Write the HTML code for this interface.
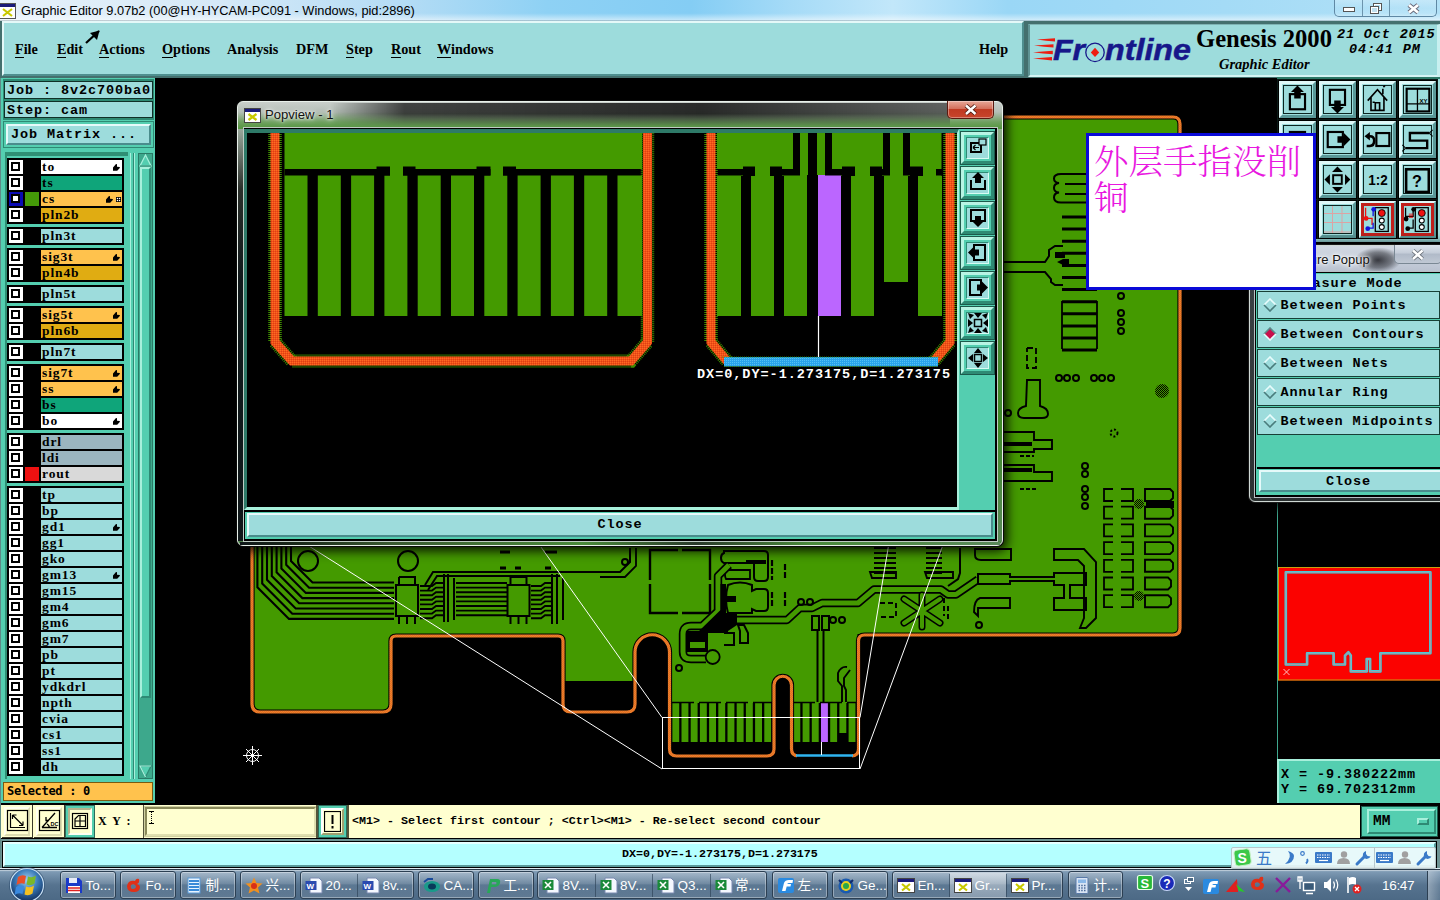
<!DOCTYPE html>
<html lang="en">
<head>
<meta charset="utf-8">
<title>Graphic Editor 9.07b2</title>
<style>
html,body{margin:0;padding:0;}
body{width:1440px;height:900px;overflow:hidden;background:#000;position:relative;font-family:"Liberation Sans","Noto Sans CJK SC",sans-serif;}
.abs{position:absolute;}
#root{position:absolute;left:0;top:0;width:1440px;height:900px;overflow:hidden;background:#000;}
.mono{font-family:"Liberation Mono","DejaVu Sans Mono",monospace;font-weight:bold;}
.serif{font-family:"Liberation Serif","DejaVu Serif",serif;font-weight:bold;}
/* title bar */
#titlebar{left:0;top:0;width:1440px;height:22px;background:linear-gradient(180deg,rgba(255,255,255,0) 0,rgba(255,255,255,0) 60%,rgba(255,255,255,0.55) 92%,rgba(60,90,100,0.9) 96%),linear-gradient(90deg,#e6f1fa 0%,#d6e9f7 15%,#b4dcf5 28%,#8ed1f4 38%,#84cdf4 48%,#a6dbf7 55%,#c2e7fa 62%,#9ad7f6 70%,#a4dbf6 85%,#b2e1f7 100%);}
#titletext{left:21px;top:2px;font-size:12.8px;color:#000;white-space:nowrap;line-height:18px;}
/* menu */
.lt{background:#9ddcdc;}
#menubar{left:2px;top:21px;width:1022px;height:55px;background:#9ddcdc;box-sizing:border-box;border-top:2px solid #e4f8f8;border-left:2px solid #e4f8f8;border-bottom:2px solid #4f8f8f;border-right:2px solid #4f8f8f;}
#logobar{left:1028px;top:24px;width:412px;height:53px;background:#9ddcdc;box-sizing:border-box;border-top:1px solid #7fb4b4;border-left:2px solid #5f9494;border-bottom:2px solid #d4f4f4;border-right:3px solid #c8f0f0;}
.mi{position:absolute;top:40px;font-size:14.2px;line-height:18px;color:#000;white-space:nowrap;}
.mi u{text-decoration:none;border-bottom:1.5px solid #000;}
/* left panel */
#leftpanel{left:1px;top:78px;width:154px;height:725px;background:#54ceb0;}
.box{position:absolute;box-sizing:border-box;background:#9ddcdc;border:1px solid #103028;}
.grp{position:absolute;left:5px;width:118px;background:#000;}
.row{position:absolute;left:0;width:118px;height:16px;}
.cb{position:absolute;left:2px;top:1px;width:14px;height:14px;background:#fff;box-sizing:border-box;border:3px solid #fff;outline:0;}
.cb i{position:absolute;left:-1px;top:-1px;width:9px;height:9px;box-sizing:border-box;border:2px solid #000;background:#fff;}
.sw{position:absolute;left:18px;top:1px;width:14px;height:14px;}
.nm{position:absolute;left:34px;top:1px;width:81px;height:14px;font-family:"Liberation Serif","DejaVu Serif",serif;font-weight:bold;font-size:13.5px;line-height:13px;color:#000;padding-left:1px;letter-spacing:0.9px;box-sizing:border-box;white-space:nowrap;overflow:hidden;}
</style>
</head>
<body>
<div id="root">
<div id="titlebar" class="abs">
  <svg class="abs" style="left:-1px;top:3px" width="17" height="16" viewBox="0 0 17 16"><rect x="0.5" y="0.5" width="16" height="15" fill="#fff" stroke="#555"/><rect x="1" y="1" width="15" height="3" fill="#1a1a7a"/><path d="M4 6 L13 13 M13 6 L4 13" stroke="#c8c800" stroke-width="2.2"/></svg>
  <div id="titletext" class="abs">Graphic Editor 9.07b2 (00@HY-HYCAM-PC091 - Windows, pid:2896)</div>
  <div class="abs" style="left:1334px;top:0;width:103px;height:17px;border:1px solid #5f88a4;border-top:0;border-radius:0 0 5px 5px;background:linear-gradient(rgba(255,255,255,0.250),rgba(255,255,255,0.050) 50%,rgba(255,255,255,0.150));box-sizing:border-box;"></div>
  <div class="abs" style="left:1362px;top:0;width:1px;height:16px;background:#6c94ad"></div>
  <div class="abs" style="left:1389px;top:0;width:1px;height:16px;background:#6c94ad"></div>
  <svg class="abs" style="left:1334px;top:0" width="100" height="17" viewBox="0 0 100 17">
    <rect x="9.500" y="7.500" width="11" height="4" fill="#fff" stroke="#555" stroke-width="1"/>
    <rect x="39.500" y="3.500" width="8" height="7" fill="none" stroke="#555" stroke-width="1"/><rect x="40.500" y="4.500" width="6" height="5" fill="none" stroke="#fff"/>
    <rect x="36.500" y="6.500" width="8" height="7" fill="#c0e0f0" stroke="#555" stroke-width="1"/><rect x="37.500" y="7.500" width="6" height="5" fill="none" stroke="#fff"/>
    <path d="M75 5 L84 12.500 M84 5 L75 12.500" stroke="#667" stroke-width="4.6"/><path d="M75 5 L84 12.500 M84 5 L75 12.500" stroke="#fff" stroke-width="2.800"/>
  </svg>
</div>

<div class="abs" style="left:0;top:21px;width:1440px;height:57px;background:#44706e"></div>
<div id="menubar" class="abs"></div>
<div id="logobar" class="abs"></div>
<div class="mi serif" style="left:15px"><u>F</u>ile</div>
<div class="mi serif" style="left:57px"><u>E</u>dit</div>
<div class="mi serif" style="left:99px"><u>A</u>ctions</div>
<div class="mi serif" style="left:162px"><u>O</u>ptions</div>
<div class="mi serif" style="left:227px">Analysis</div>
<div class="mi serif" style="left:296px">DFM</div>
<div class="mi serif" style="left:346px"><u>S</u>tep</div>
<div class="mi serif" style="left:391px"><u>R</u>out</div>
<div class="mi serif" style="left:437px"><u>W</u>indows</div>
<div class="mi serif" style="left:979px">Help</div>
<svg class="abs" style="left:82px;top:28px" width="20" height="20" viewBox="0 0 20 20"><path d="M17 3 L4 15" stroke="#000" stroke-width="2.2"/><path d="M17.500 2.500 L8 5 L15 12 Z" fill="#000"/></svg>
<!-- Frontline logo -->
<svg class="abs" style="left:1028px;top:30px" width="170" height="40" viewBox="1028 30 170 40">
  <g fill="#ee1c10"><path d="M1037 39.500 L1055 38.200 V41.600 L1046 40.800 Z"/><path d="M1034 45.600 L1053.500 44.200 V47.600 L1044 46.800 Z"/><path d="M1033 52.200 L1052.800 50.800 V54.200 L1043 53.400 Z"/><path d="M1033 58.400 L1052 57 V60.400 L1043 59.600 Z"/></g>
  <g font-family="Liberation Sans, sans-serif" font-weight="bold" font-style="italic" font-size="30" fill="#17178a" stroke="#17178a" stroke-width="0.500">
  <text x="1053" y="59.500" textLength="32" lengthAdjust="spacingAndGlyphs">Fr</text>
  <text x="1105" y="59.500" textLength="86" lengthAdjust="spacingAndGlyphs">ntline</text></g>
  <circle cx="1095" cy="52.400" r="9.200" fill="none" stroke="#17178a" stroke-width="1.300"/>
  <path d="M1095 47.800 L1099.200 52.400 L1095 57 L1090.800 52.400 Z" fill="#ee1c10"/>
</svg>
<div class="abs serif" style="left:1196px;top:25px;font-size:24.6px;line-height:28px;white-space:nowrap;color:#000">Genesis 2000</div>
<div class="abs serif" style="left:1219px;top:55px;font-size:14.5px;line-height:18px;font-style:italic;white-space:nowrap;color:#000">Graphic Editor</div>
<div class="abs mono" style="left:1337px;top:27px;font-size:13.5px;line-height:16px;font-style:italic;white-space:pre;color:#000;letter-spacing:0.85px">21 Oct 2015</div>
<div class="abs mono" style="left:1349px;top:42px;font-size:13.5px;line-height:16px;font-style:italic;white-space:pre;color:#000;letter-spacing:0.85px">04:41 PM</div>

<div id="leftpanel" class="abs"></div>
<div class="abs" style="left:3px;top:79px;width:151px;height:41px;background:#2e8a74"></div>
<div class="box mono" style="left:4px;top:81px;width:149px;height:18px;font-size:13.5px;line-height:18.5px;padding-left:2px;white-space:pre;letter-spacing:0.9px">Job : 8v2c700ba0</div>
<div class="box mono" style="left:4px;top:101px;width:149px;height:17px;font-size:13.5px;line-height:17.5px;padding-left:2px;white-space:pre;letter-spacing:0.9px">Step: cam</div>
<div class="abs" style="left:3px;top:121px;width:151px;height:27px;background:#2e8a74"></div>
<div class="abs" style="left:4px;top:122px;width:149px;height:25px;background:#54ceb0"></div>
<div class="abs mono" style="left:6px;top:124px;width:145px;height:21px;box-sizing:border-box;background:#9ddcdc;border-top:2px solid #e6fafa;border-left:2px solid #e6fafa;border-bottom:2px solid #4a8c8c;border-right:2px solid #4a8c8c;font-size:13.5px;line-height:18.5px;padding-left:3px;white-space:pre;letter-spacing:0.9px">Job Matrix ...</div>
<div class="abs" style="left:5px;top:152px;width:123px;height:627px;background:#2f8f74"></div>
<div class="abs" style="left:7px;top:156px;width:121px;height:623px;background:#54ceb0"></div>
<div class="abs" style="left:7px;top:158px;width:117px;height:66px;background:#000">
<div class="row" style="top:1px"><span class="cb"><i></i></span><span class="nm" style="background:#ffffff">to</span><svg class="abs" style="left:106px;top:5px" width="8" height="8" viewBox="0 0 8 8"><path d="M0 6.800 V3.600 L3 0 L4 0.300 V2.800 L6.800 3 V4 L4.200 6.800 Z" fill="#000"/></svg></div>
<div class="row" style="top:17px"><span class="cb"><i></i></span><span class="nm" style="background:#0fa57a">ts</span></div>
<div class="row" style="top:33px"><span class="cb" style="border-color:#0a0ab4;background:#0a0ab4"><i></i></span><span class="sw" style="background:#449a08"></span><span class="nm" style="background:#ffc24d">cs</span><svg class="abs" style="left:99px;top:5px" width="8" height="8" viewBox="0 0 8 8"><path d="M0 6.800 V3.600 L3 0 L4 0.300 V2.800 L6.800 3 V4 L4.200 6.800 Z" fill="#000"/></svg><svg class="abs" style="left:109px;top:6px" width="5" height="5" viewBox="0 0 5 5"><rect x="0" y="0" width="5" height="5" fill="#000"/><rect x="0.800" y="0.800" width="1.300" height="1.300" fill="#fff"/><rect x="2.900" y="0.800" width="1.300" height="1.300" fill="#fff"/><rect x="0.800" y="2.900" width="1.300" height="1.300" fill="#fff"/><rect x="2.900" y="2.900" width="1.300" height="1.300" fill="#fff"/></svg></div>
<div class="row" style="top:49px"><span class="cb"><i></i></span><span class="nm" style="background:#e0ac12">pln2b</span></div>
</div>
<div class="abs" style="left:7px;top:227px;width:117px;height:18px;background:#000">
<div class="row" style="top:1px"><span class="cb"><i></i></span><span class="nm" style="background:#9ddcdc">pln3t</span></div>
</div>
<div class="abs" style="left:7px;top:248px;width:117px;height:34px;background:#000">
<div class="row" style="top:1px"><span class="cb"><i></i></span><span class="nm" style="background:#ffc24d">sig3t</span><svg class="abs" style="left:106px;top:5px" width="8" height="8" viewBox="0 0 8 8"><path d="M0 6.800 V3.600 L3 0 L4 0.300 V2.800 L6.800 3 V4 L4.200 6.800 Z" fill="#000"/></svg></div>
<div class="row" style="top:17px"><span class="cb"><i></i></span><span class="nm" style="background:#e0ac12">pln4b</span></div>
</div>
<div class="abs" style="left:7px;top:285px;width:117px;height:18px;background:#000">
<div class="row" style="top:1px"><span class="cb"><i></i></span><span class="nm" style="background:#9ddcdc">pln5t</span></div>
</div>
<div class="abs" style="left:7px;top:306px;width:117px;height:34px;background:#000">
<div class="row" style="top:1px"><span class="cb"><i></i></span><span class="nm" style="background:#ffc24d">sig5t</span><svg class="abs" style="left:106px;top:5px" width="8" height="8" viewBox="0 0 8 8"><path d="M0 6.800 V3.600 L3 0 L4 0.300 V2.800 L6.800 3 V4 L4.200 6.800 Z" fill="#000"/></svg></div>
<div class="row" style="top:17px"><span class="cb"><i></i></span><span class="nm" style="background:#e0ac12">pln6b</span></div>
</div>
<div class="abs" style="left:7px;top:343px;width:117px;height:18px;background:#000">
<div class="row" style="top:1px"><span class="cb"><i></i></span><span class="nm" style="background:#9ddcdc">pln7t</span></div>
</div>
<div class="abs" style="left:7px;top:364px;width:117px;height:66px;background:#000">
<div class="row" style="top:1px"><span class="cb"><i></i></span><span class="nm" style="background:#ffc24d">sig7t</span><svg class="abs" style="left:106px;top:5px" width="8" height="8" viewBox="0 0 8 8"><path d="M0 6.800 V3.600 L3 0 L4 0.300 V2.800 L6.800 3 V4 L4.200 6.800 Z" fill="#000"/></svg></div>
<div class="row" style="top:17px"><span class="cb"><i></i></span><span class="nm" style="background:#ffc24d">ss</span><svg class="abs" style="left:106px;top:5px" width="8" height="8" viewBox="0 0 8 8"><path d="M0 6.800 V3.600 L3 0 L4 0.300 V2.800 L6.800 3 V4 L4.200 6.800 Z" fill="#000"/></svg></div>
<div class="row" style="top:33px"><span class="cb"><i></i></span><span class="nm" style="background:#0fa57a">bs</span></div>
<div class="row" style="top:49px"><span class="cb"><i></i></span><span class="nm" style="background:#ffffff">bo</span><svg class="abs" style="left:106px;top:5px" width="8" height="8" viewBox="0 0 8 8"><path d="M0 6.800 V3.600 L3 0 L4 0.300 V2.800 L6.800 3 V4 L4.200 6.800 Z" fill="#000"/></svg></div>
</div>
<div class="abs" style="left:7px;top:433px;width:117px;height:50px;background:#000">
<div class="row" style="top:1px"><span class="cb"><i></i></span><span class="nm" style="background:#9bb5bf">drl</span></div>
<div class="row" style="top:17px"><span class="cb"><i></i></span><span class="nm" style="background:#9bb5bf">ldi</span></div>
<div class="row" style="top:33px"><span class="cb"><i></i></span><span class="sw" style="background:#ee1111"></span><span class="nm" style="background:#d9d9d9">rout</span></div>
</div>
<div class="abs" style="left:7px;top:486px;width:117px;height:290px;background:#000">
<div class="row" style="top:1px"><span class="cb"><i></i></span><span class="nm" style="background:#9ddcdc">tp</span></div>
<div class="row" style="top:17px"><span class="cb"><i></i></span><span class="nm" style="background:#9ddcdc">bp</span></div>
<div class="row" style="top:33px"><span class="cb"><i></i></span><span class="nm" style="background:#9ddcdc">gd1</span><svg class="abs" style="left:106px;top:5px" width="8" height="8" viewBox="0 0 8 8"><path d="M0 6.800 V3.600 L3 0 L4 0.300 V2.800 L6.800 3 V4 L4.200 6.800 Z" fill="#000"/></svg></div>
<div class="row" style="top:49px"><span class="cb"><i></i></span><span class="nm" style="background:#9ddcdc">gg1</span></div>
<div class="row" style="top:65px"><span class="cb"><i></i></span><span class="nm" style="background:#9ddcdc">gko</span></div>
<div class="row" style="top:81px"><span class="cb"><i></i></span><span class="nm" style="background:#9ddcdc">gm13</span><svg class="abs" style="left:106px;top:5px" width="8" height="8" viewBox="0 0 8 8"><path d="M0 6.800 V3.600 L3 0 L4 0.300 V2.800 L6.800 3 V4 L4.200 6.800 Z" fill="#000"/></svg></div>
<div class="row" style="top:97px"><span class="cb"><i></i></span><span class="nm" style="background:#9ddcdc">gm15</span></div>
<div class="row" style="top:113px"><span class="cb"><i></i></span><span class="nm" style="background:#9ddcdc">gm4</span></div>
<div class="row" style="top:129px"><span class="cb"><i></i></span><span class="nm" style="background:#9ddcdc">gm6</span></div>
<div class="row" style="top:145px"><span class="cb"><i></i></span><span class="nm" style="background:#9ddcdc">gm7</span></div>
<div class="row" style="top:161px"><span class="cb"><i></i></span><span class="nm" style="background:#9ddcdc">pb</span></div>
<div class="row" style="top:177px"><span class="cb"><i></i></span><span class="nm" style="background:#9ddcdc">pt</span></div>
<div class="row" style="top:193px"><span class="cb"><i></i></span><span class="nm" style="background:#9ddcdc">ydkdrl</span></div>
<div class="row" style="top:209px"><span class="cb"><i></i></span><span class="nm" style="background:#9ddcdc">npth</span></div>
<div class="row" style="top:225px"><span class="cb"><i></i></span><span class="nm" style="background:#9ddcdc">cvia</span></div>
<div class="row" style="top:241px"><span class="cb"><i></i></span><span class="nm" style="background:#9ddcdc">cs1</span></div>
<div class="row" style="top:257px"><span class="cb"><i></i></span><span class="nm" style="background:#9ddcdc">ss1</span></div>
<div class="row" style="top:273px"><span class="cb"><i></i></span><span class="nm" style="background:#9ddcdc">dh</span></div>
</div>
<div class="abs" style="left:128px;top:153px;width:9px;height:626px;background:#54ceb0"></div>
<div class="abs" style="left:130px;top:153px;width:1px;height:626px;background:#a8f0dc"></div>
<div class="abs" style="left:133px;top:153px;width:1px;height:626px;background:#2e8a74"></div>
<div class="abs" style="left:134px;top:153px;width:1px;height:626px;background:#a8f0dc"></div>
<div class="abs" style="left:138px;top:153px;width:15px;height:626px;background:#3da88c;box-sizing:border-box;border:1px solid #2a7a66"></div>
<div class="abs" style="left:140px;top:167px;width:11px;height:531px;background:#54ceb0;box-sizing:border-box;border-left:2px solid #a8f0dc;border-top:2px solid #a8f0dc;border-right:2px solid #2e8a74;border-bottom:2px solid #2e8a74"></div>
<svg class="abs" style="left:139px;top:154px" width="13" height="13" viewBox="0 0 13 13"><path d="M6.500 1 L12 12 H1 Z" fill="#54ceb0" stroke="#a8f0dc" stroke-width="1.200"/><path d="M12 12 H1" stroke="#2e8a74" stroke-width="1.200"/></svg>
<svg class="abs" style="left:139px;top:765px" width="13" height="13" viewBox="0 0 13 13"><path d="M6.500 12 L12 1 H1 Z" fill="#54ceb0" stroke="#2e8a74" stroke-width="1.200"/><path d="M12 1 H1 L6.500 12" stroke="#a8f0dc" stroke-width="1.200" fill="none"/></svg>
<div class="abs mono" style="left:3px;top:782px;width:150px;height:19px;box-sizing:border-box;background:#ffc24d;border:1px solid #7a5a10;font-size:12px;line-height:16px;padding-left:3px;white-space:pre;font-family:'DejaVu Sans Mono','Liberation Mono',monospace;letter-spacing:-0.32px">Selected : 0</div>

<svg class="abs" style="left:0;top:0" width="1440" height="900" viewBox="0 0 1440 900">
<defs><clipPath id="cv"><rect x="155" y="78" width="1122" height="725"/></clipPath>
<pattern id="hat" width="2" height="2" patternUnits="userSpaceOnUse"><rect width="2" height="2" fill="#449a00"/><rect width="1" height="1" fill="#000"/><rect x="1" y="1" width="1" height="1" fill="#000"/></pattern>
<pattern id="och" width="2" height="2" patternUnits="userSpaceOnUse"><rect width="2" height="2" fill="#f4661c"/><rect width="1" height="1" fill="#dc8a34"/><rect x="1" y="1" width="1" height="1" fill="#dc8a34"/></pattern>
</defs>
<g clip-path="url(#cv)">
<path d="M258 118 H1174 Q1179 118 1179 123 V634 H857.500 V703 H792 V685 A8.750 8.750 0 0 0 774.500 685 V703 H670.500 V652 A17.250 17.250 0 0 0 636 652 V681 H564 V637 H390 V705 Q390 711 384 711 H260 Q254 711 254 705 V124 Q254 118 258 118 Z" fill="#449a00"/>
<rect x="672.3" y="703" width="6.900" height="39" fill="#449a00"/>
<rect x="681.5" y="703" width="6.900" height="39" fill="#449a00"/>
<rect x="690.7" y="703" width="6.900" height="39" fill="#449a00"/>
<rect x="699.9" y="703" width="6.900" height="39" fill="#449a00"/>
<rect x="709.1" y="703" width="6.900" height="39" fill="#449a00"/>
<rect x="718.3" y="703" width="6.900" height="39" fill="#449a00"/>
<rect x="727.5" y="703" width="6.900" height="39" fill="#449a00"/>
<rect x="736.7" y="703" width="6.900" height="39" fill="#449a00"/>
<rect x="745.9" y="703" width="6.900" height="39" fill="#449a00"/>
<rect x="755.1" y="703" width="6.900" height="39" fill="#449a00"/>
<rect x="764.3" y="703" width="6.900" height="39" fill="#449a00"/>
<rect x="793.4" y="703" width="6.900" height="39" fill="#449a00"/>
<rect x="802.6" y="703" width="6.900" height="39" fill="#449a00"/>
<rect x="811.8" y="703" width="6.900" height="39" fill="#449a00"/>
<rect x="821.0" y="703" width="6.900" height="39" fill="#bb66ff"/>
<rect x="830.2" y="703" width="6.900" height="39" fill="#449a00"/>
<rect x="839.4" y="703" width="6.900" height="30" fill="#449a00"/>
<rect x="848.6" y="703" width="6.900" height="39" fill="#449a00"/>
<path d="M672 702.500 H772 M793 702.500 H856" stroke="#000" stroke-width="1.300" stroke-dasharray="22 5"/>
<path d="M260 117 H1173 Q1180 117 1180 124 V628 Q1180 635 1173 635 H864.500 Q858.500 635 858.500 641 V749 Q858.500 756 851.500 756 H798.500 Q791.500 756 791.500 749 V685 A8.750 8.750 0 0 0 774 685 V749 Q774 756 767 756 H676.500 Q669.500 756 669.500 749 V652 A17.250 17.250 0 0 0 635 652 V704 Q635 712 627 712 H571 Q563 712 563 704 V641 Q563 636 558 636 H396 Q391 636 391 641 V704 Q391 712 383 712 H260 Q252 712 252 704 V125 Q252 117 260 117 Z" fill="none" stroke="#000" stroke-width="5.200"/>
<path d="M260 117 H1173 Q1180 117 1180 124 V628 Q1180 635 1173 635 H864.500 Q858.500 635 858.500 641 V749 Q858.500 756 851.500 756 H798.500 Q791.500 756 791.500 749 V685 A8.750 8.750 0 0 0 774 685 V749 Q774 756 767 756 H676.500 Q669.500 756 669.500 749 V652 A17.250 17.250 0 0 0 635 652 V704 Q635 712 627 712 H571 Q563 712 563 704 V641 Q563 636 558 636 H396 Q391 636 391 641 V704 Q391 712 383 712 H260 Q252 712 252 704 V125 Q252 117 260 117 Z" fill="none" stroke="url(#och)" stroke-width="3.200"/>
<path d="M797 756 H852" stroke="#000" stroke-width="4.500"/><path d="M796 755.500 H853" stroke="#2fb4f0" stroke-width="2.400"/>
<path d="M821.500 742 V755" stroke="#fff" stroke-width="1"/>
<path d="M394 582.5 H312.5 L291.0 561.0 V546" stroke="#000" fill="none" stroke-width="2.100"/>
<path d="M394 587.7 H309.1 L286.2 564.8 V546" stroke="#000" fill="none" stroke-width="2.100"/>
<path d="M394 592.9 H305.8 L281.4 568.5 V546" stroke="#000" fill="none" stroke-width="2.100"/>
<path d="M394 598.1 H302.4 L276.6 572.3 V546" stroke="#000" fill="none" stroke-width="2.100"/>
<path d="M394 603.3 H299.1 L271.8 576.0 V546" stroke="#000" fill="none" stroke-width="2.100"/>
<path d="M394 608.5 H295.7 L267.0 579.8 V546" stroke="#000" fill="none" stroke-width="2.100"/>
<path d="M394 613.7 H292.3 L262.2 583.6 V546" stroke="#000" fill="none" stroke-width="2.100"/>
<path d="M394 618.9 H289.0 L257.4 587.3 V546" stroke="#000" fill="none" stroke-width="2.100"/>
<circle cx="308" cy="561" r="10" stroke="#000" fill="none" stroke-width="2"/>
<circle cx="408" cy="561" r="10" stroke="#000" fill="none" stroke-width="2"/>
<rect x="396.0" y="585" width="22" height="31" stroke="#000" fill="none" stroke-width="2"/>
<path d="M399.0 577 v8 M415.0 577 v8 M399.0 577 h17 M399.0 616 v8 M407.0 616 v8 M415.0 616 v8" stroke="#000" fill="none" stroke-width="2"/>
<rect x="507.5" y="585" width="22" height="31" stroke="#000" fill="none" stroke-width="2"/>
<path d="M510.5 577 v8 M526.5 577 v8 M510.5 577 h17 M510.5 616 v8 M518.5 616 v8 M526.5 616 v8" stroke="#000" fill="none" stroke-width="2"/>
<path d="M420 586.0 h12 l4 -3 h8 M456 583.0 H507" stroke="#000" fill="none" stroke-width="1.900"/>
<path d="M531 586.0 h10 l4 -3 h8" stroke="#000" fill="none" stroke-width="1.900"/>
<path d="M420 590.6 h12 l4 -3 h8 M456 587.6 H507" stroke="#000" fill="none" stroke-width="1.900"/>
<path d="M531 590.6 h10 l4 -3 h8" stroke="#000" fill="none" stroke-width="1.900"/>
<path d="M420 595.2 h12 l4 -3 h8 M456 592.2 H507" stroke="#000" fill="none" stroke-width="1.900"/>
<path d="M531 595.2 h10 l4 -3 h8" stroke="#000" fill="none" stroke-width="1.900"/>
<path d="M420 599.8 h12 l4 -3 h8 M456 596.8 H507" stroke="#000" fill="none" stroke-width="1.900"/>
<path d="M531 599.8 h10 l4 -3 h8" stroke="#000" fill="none" stroke-width="1.900"/>
<path d="M420 604.4 h12 l4 -3 h8 M456 601.4 H507" stroke="#000" fill="none" stroke-width="1.900"/>
<path d="M531 604.4 h10 l4 -3 h8" stroke="#000" fill="none" stroke-width="1.900"/>
<path d="M420 609.0 h12 l4 -3 h8 M456 606.0 H507" stroke="#000" fill="none" stroke-width="1.900"/>
<path d="M531 609.0 h10 l4 -3 h8" stroke="#000" fill="none" stroke-width="1.900"/>
<path d="M420 613.6 h12 l4 -3 h8 M456 610.6 H507" stroke="#000" fill="none" stroke-width="1.900"/>
<path d="M531 613.6 h10 l4 -3 h8" stroke="#000" fill="none" stroke-width="1.900"/>
<path d="M420 618.2 h12 l4 -3 h8 M456 615.2 H507" stroke="#000" fill="none" stroke-width="1.900"/>
<path d="M531 618.2 h10 l4 -3 h8" stroke="#000" fill="none" stroke-width="1.900"/>
<path d="M444 574 V622 M448 574 V622 M454 578 V620" stroke="#000" fill="none" stroke-width="2"/>
<path d="M552 574 V624 M557 574 V624 M563 578 V620" stroke="#000" fill="none" stroke-width="2"/>
<path d="M425 585 L433 572 H620 L630 562 V548" stroke="#000" fill="none" stroke-width="2"/>
<path d="M428 590 L437 576 H560" stroke="#000" fill="none" stroke-width="2"/>
<path d="M500 552 h10 M545 552 h12 M500 568 h6 M515 568 h6 M545 568 h6" stroke="#000" fill="none" stroke-width="3"/>
<path d="M650 580 V550 H678 M682 550 H710 V580 M710 584 V613 H682 M678 613 H650 V584" stroke="#000" fill="none" stroke-width="2.400"/>
<path d="M600 577 H625 L636 566 V548" stroke="#000" fill="none" stroke-width="1.800"/>
<circle cx="625" cy="562" r="3" stroke="#000" fill="none" stroke-width="2"/>
<path d="M724 551 h40 q4 0 4 4 v22 q0 4 -4 4 h-6 q-4 0 -4 -4 v-14 h-30 q-3 -1 -3 -5 q0 -4 3 -5 Z" stroke="#000" fill="none" stroke-width="2"/>
<path d="M726 570 h24 v9 h-24 q-2 -4 0 -9 Z" stroke="#000" fill="none" stroke-width="1.800"/>
<path d="M728 585 q12 -5 24 0 v6 l4 -2 h8 q4 0 4 4 v14 q0 4 -4 4 h-8 l-4 -2 v4 h-24 q-4 -14 0 -28 Z" stroke="#000" fill="none" stroke-width="2"/>
<path d="M724 596 h12 v6 h-12 Z M746 560 h20 v4 h-20 Z" fill="#000"/>
<path d="M772 560 v20 M785 564 v14 M772 592 v14 M785 592 v14" stroke="#000" fill="none" stroke-width="2.200" stroke-dasharray="6 2"/>
<path d="M978 579.500 L956 594.500 H948 L941 589.500 H874 L858 603 H822 L812 608 H800 L787 620 H735" stroke="#000" fill="none" stroke-width="8.400" stroke-linejoin="round"/>
<path d="M729 565 L718 576 V611 L702 626 H691 Q683 626 683 634 V652 Q683 659 691 659 H706" stroke="#000" fill="none" stroke-width="8.400" stroke-linejoin="round"/>
<path d="M978 579.500 L956 594.500 H948 L941 589.500 H874 L858 603 H822 L812 608 H800 L787 620 H735" fill="none" stroke="#449a00" stroke-width="5" stroke-linejoin="round"/>
<path d="M729 565 L718 576 V611 L702 626 H691 Q683 626 683 634 V652 Q683 659 691 659 H706" fill="none" stroke="#449a00" stroke-width="5" stroke-linejoin="round"/>
<circle cx="712.700" cy="657" r="7" stroke="#000" fill="none" stroke-width="1.800" style="fill:#449a00"/>
<path d="M720.500 584 H726 V613 H737 V625 L728 631 V637 H708 V652 H687 V631 H699 L720.500 610 Z" fill="#000"/>
<rect x="690" y="642" width="15" height="6" fill="#449a00"/><rect x="708" y="633" width="17" height="5.500" fill="#449a00"/><rect x="724" y="633" width="10" height="12" fill="#449a00"/>
<path d="M724 633 h10 v12 h-10 M738 625 h6 l4 8 v10 h-8 v-12 Z" stroke="#000" fill="none" stroke-width="2"/>
<circle cx="679" cy="668" r="3" stroke="#000" fill="none" stroke-width="2"/>
<circle cx="801" cy="602" r="3" stroke="#000" fill="none" stroke-width="2"/>
<circle cx="810" cy="602" r="3" stroke="#000" fill="none" stroke-width="2"/>
<circle cx="833" cy="620" r="3" stroke="#000" fill="none" stroke-width="2"/>
<circle cx="842" cy="620" r="3" stroke="#000" fill="none" stroke-width="2"/>
<path d="M812 616 h7 v14 h-7 Z M822 616 h7 v14 h-7 Z" stroke="#000" fill="none" stroke-width="2"/>
<path d="M817.500 630 V702 M823.500 630 V702" stroke="#000" fill="none" stroke-width="2"/>
<path d="M847 667 q-6 -1 -9 6 v8 l4 5 v16 M850 670 l-6 8 v8 l2 4 v12" stroke="#000" fill="none" stroke-width="1.900"/>
<path d="M922 611 m-18 -12 l36 24 m0 -24 l-36 24 m18 -28 v32" stroke="#000" stroke-width="7" stroke-linecap="round" fill="none"/>
<path d="M922 611 m-18 -12 l36 24 m0 -24 l-36 24 m18 -28 v32" stroke="#449a00" stroke-width="4" stroke-linecap="round" fill="none"/>
<path d="M880 603 h16 v14 h-16" stroke="#000" fill="none" stroke-width="1.900" stroke-dasharray="5 3"/>
<path d="M944 598 v18 M948 606 v14" stroke="#000" fill="none" stroke-width="2" stroke-dasharray="5 3"/>
<path d="M874 548 h22 M926 548 h16" stroke="#000" fill="none" stroke-width="2"/>
<path d="M874 553 h22 M926 553 h16" stroke="#000" fill="none" stroke-width="2"/>
<path d="M874 558 h22 M926 558 h16" stroke="#000" fill="none" stroke-width="2"/>
<path d="M874 563 h22 M926 563 h16" stroke="#000" fill="none" stroke-width="2"/>
<path d="M874 568 h22 M926 568 h16" stroke="#000" fill="none" stroke-width="2"/>
<path d="M874 573 h22 M926 573 h16" stroke="#000" fill="none" stroke-width="2"/>
<path d="M870 572 h26 v6 h-24 Z M925 572 h28 v6 h-26 Z" stroke="#000" fill="none" stroke-width="1.900"/>
<path d="M975 549 h36 v11 h-30 q-6 0 -6 -5 Z" stroke="#000" fill="none" stroke-width="1.900"/>
<path d="M978 574 H1010 V577 H1054 V573 H1086 V585 H1070 V598 H1086 V610 H1054 V598 H1064 V585 H1054 V581 H1010 V584 H978 Z" stroke="#000" fill="none" stroke-width="2" style="fill:#449a00"/>
<path d="M948 586 L958 579 L960 573 V548" stroke="#000" fill="none" stroke-width="2"/>
<path d="M1010 598 h-30 q-6 2 -6 14 l4 4 v-8 h32 Z" stroke="#000" fill="none" stroke-width="1.900"/>
<circle cx="979" cy="625" r="3" stroke="#000" fill="none" stroke-width="2"/>
<path d="M1054 549 H1084 L1096 562 V618 L1086 628 H1080 L1084 618 V566 L1078 560 H1054 Z" stroke="#000" fill="none" stroke-width="1.900"/>
<path d="M1113 489.0 h-9 v12 h9 M1121 489.0 h12 v12 h-12" stroke="#000" fill="none" stroke-width="1.800"/>
<path d="M1145 489.0 h25 l3 3 v6 l-3 3 h-25 Z" stroke="#000" fill="none" stroke-width="1.900"/>
<path d="M1113 506.7 h-9 v12 h9 M1121 506.7 h12 v12 h-12" stroke="#000" fill="none" stroke-width="1.800"/>
<path d="M1145 506.7 h25 l3 3 v6 l-3 3 h-25 Z" stroke="#000" fill="none" stroke-width="1.900"/>
<path d="M1113 524.4 h-9 v12 h9 M1121 524.4 h12 v12 h-12" stroke="#000" fill="none" stroke-width="1.800"/>
<path d="M1145 524.4 h25 l3 3 v6 l-3 3 h-25 Z" stroke="#000" fill="none" stroke-width="1.900"/>
<path d="M1113 542.1 h-9 v12 h9 M1121 542.1 h12 v12 h-12" stroke="#000" fill="none" stroke-width="1.800"/>
<path d="M1145 542.1 h25 l3 3 v6 l-3 3 h-25 Z" stroke="#000" fill="none" stroke-width="1.900"/>
<path d="M1113 559.8 h-9 v12 h9 M1121 559.8 h12 v12 h-12" stroke="#000" fill="none" stroke-width="1.800"/>
<path d="M1145 559.8 h25 l3 3 v6 l-3 3 h-25 Z" stroke="#000" fill="none" stroke-width="1.900"/>
<path d="M1113 577.5 h-9 v12 h9 M1121 577.5 h12 v12 h-12" stroke="#000" fill="none" stroke-width="1.800"/>
<path d="M1145 577.5 h23 l3 3 v6 l-3 3 h-23 Z" stroke="#000" fill="none" stroke-width="1.900"/>
<path d="M1113 595.2 h-9 v12 h9 M1121 595.2 h12 v12 h-12" stroke="#000" fill="none" stroke-width="1.800"/>
<path d="M1145 595.2 h23 l3 3 v6 l-3 3 h-23 Z" stroke="#000" fill="none" stroke-width="1.900"/>
<rect x="1146" y="501" width="28" height="7" fill="#000"/>
<circle cx="1139" cy="504" r="5" fill="url(#hat)"/><circle cx="1139" cy="596" r="5" fill="url(#hat)"/>
<circle cx="1121" cy="296" r="3" stroke="#000" fill="none" stroke-width="2"/>
<circle cx="1121" cy="313" r="3" stroke="#000" fill="none" stroke-width="2"/>
<circle cx="1121" cy="322" r="3" stroke="#000" fill="none" stroke-width="2"/>
<circle cx="1121" cy="331" r="3" stroke="#000" fill="none" stroke-width="2"/>
<circle cx="1059" cy="378" r="3" stroke="#000" fill="none" stroke-width="2"/>
<circle cx="1067" cy="378" r="3" stroke="#000" fill="none" stroke-width="2"/>
<circle cx="1076" cy="378" r="3" stroke="#000" fill="none" stroke-width="2"/>
<circle cx="1094" cy="378" r="3" stroke="#000" fill="none" stroke-width="2"/>
<circle cx="1102" cy="378" r="3" stroke="#000" fill="none" stroke-width="2"/>
<circle cx="1111" cy="378" r="3" stroke="#000" fill="none" stroke-width="2"/>
<circle cx="1085" cy="466" r="3" stroke="#000" fill="none" stroke-width="2"/>
<circle cx="1085" cy="474" r="3" stroke="#000" fill="none" stroke-width="2"/>
<circle cx="1085" cy="489" r="3" stroke="#000" fill="none" stroke-width="2"/>
<circle cx="1085" cy="497" r="3" stroke="#000" fill="none" stroke-width="2"/>
<circle cx="1085" cy="506" r="3" stroke="#000" fill="none" stroke-width="2"/>
<circle cx="1162" cy="391" r="7" fill="url(#hat)"/>
<circle cx="1114" cy="433" r="3.500" stroke="#000" fill="none" stroke-width="1.900" stroke-dasharray="2 2"/>
<path d="M1027 348 h9 v20 h-9 Z M1027 348 v-0" stroke="#000" fill="none" stroke-width="1.900" stroke-dasharray="6 3"/>
<path d="M1027 380 h13 v26 q8 2 8 8 q0 4 -6 4 h-18 q-6 0 -6 -5 q0 -5 8 -7 Z" stroke="#000" fill="none" stroke-width="1.900"/>
<circle cx="1008" cy="413" r="3" stroke="#000" fill="none" stroke-width="2"/>
<path d="M1004 432 h30 v8 h18 v9 h-18 v3 h-30 M1004 465 h30 v7 h18 v9 h-48" stroke="#000" fill="none" stroke-width="1.900"/>
<path d="M1004 444 h28 M1004 470 h28" stroke="#000" fill="none" stroke-width="4"/>
<path d="M1020 456 h14 M1020 489 h16" stroke="#000" fill="none" stroke-width="1.900" stroke-dasharray="4 2"/>
<path d="M1062 301 V349 M1097 301 V349" stroke="#000" fill="none" stroke-width="1.800"/>
<path d="M1062 217.0 H1097" stroke="#000" fill="none" stroke-width="3"/>
<path d="M1062 229.1 H1097" stroke="#000" fill="none" stroke-width="3"/>
<path d="M1062 241.2 H1097" stroke="#000" fill="none" stroke-width="3"/>
<path d="M1062 253.3 H1097" stroke="#000" fill="none" stroke-width="3"/>
<path d="M1062 265.4 H1097" stroke="#000" fill="none" stroke-width="3"/>
<path d="M1062 277.5 H1097" stroke="#000" fill="none" stroke-width="3"/>
<path d="M1062 289.6 H1097" stroke="#000" fill="none" stroke-width="3"/>
<path d="M1062 301.7 H1097" stroke="#000" fill="none" stroke-width="3"/>
<path d="M1062 313.8 H1097" stroke="#000" fill="none" stroke-width="3"/>
<path d="M1062 325.9 H1097" stroke="#000" fill="none" stroke-width="3"/>
<path d="M1062 338.0 H1097" stroke="#000" fill="none" stroke-width="3"/>
<path d="M1062 350.1 H1097" stroke="#000" fill="none" stroke-width="3"/>
<path d="M1087 174 h-26 q-7 0 -7 4.500 q0 4 5 4.500 q-5 0.500 -5 5 q0 4 5 4.500 q-5 0.500 -5 5 q0 5 7 5 h26 M1087 184 h-22 M1087 194 h-22" stroke="#000" fill="none" stroke-width="2"/>
<path d="M1003 262 h42 l4 -6 v-6 l6 -4 h8 M1003 272 h42 l6 7 v3 l4 3 h8" stroke="#000" fill="none" stroke-width="2"/>
<path d="M1055 252 h10 v6 h-10 Z M1057 262 l6 -3 h6 v6 h-6 Z" fill="#000"/>
<path d="M247 507 L662 769 M247 133 L662 717.500" stroke="#fff" stroke-width="1" fill="none"/>
<path d="M957 133 L860 717.500 M957 507 L860 769" stroke="#fff" stroke-width="1" fill="none"/>
<rect x="662.500" y="717.500" width="197" height="51" fill="none" stroke="#fff" stroke-width="1"/>
<g stroke="#fff" stroke-width="1" fill="none"><circle cx="252.500" cy="755.500" r="6"/><path d="M243 755.500 h19 M252.500 746 v19 M246 749 l13 13 M259 749 l-13 13"/></g>
</g></svg>

<div class="abs" style="left:1277px;top:78px;width:163px;height:164px;background:#0a1a16"></div>
<div class="abs" style="left:1277px;top:77px;width:163px;height:2px;background:#2e7a68"></div>
<div class="abs" style="left:1438px;top:79px;width:2px;height:163px;background:#a0dcdc"></div>
<div class="abs" style="left:1278px;top:80px;width:39px;height:39px;box-sizing:border-box;background:#9ddcdc;border:1px solid #000"></div>
<div class="abs" style="left:1279px;top:81px;width:37px;height:37px;box-sizing:border-box;border-top:3px solid #dff8f8;border-left:3px solid #dff8f8;border-bottom:3px solid #5a9898;border-right:3px solid #5a9898;background:#9ddcdc"></div>
<div class="abs" style="left:1283px;top:85px;width:29px;height:29px;box-sizing:border-box;border:1px solid #0c2420;background:#9ddcdc"></div>
<svg class="abs" style="left:1278px;top:80px" width="39" height="39" viewBox="0 0 39 39"><g transform="translate(20 19) scale(1.080) translate(-19.500 -18.500)"><rect x="12" y="14" width="14" height="14" stroke="#000" fill="none" stroke-width="2"/><path d="M19 6 L25 12 H22 V18 H16 V12 H13 Z" fill="#000"/></g></svg>
<div class="abs" style="left:1318px;top:80px;width:39px;height:39px;box-sizing:border-box;background:#9ddcdc;border:1px solid #000"></div>
<div class="abs" style="left:1319px;top:81px;width:37px;height:37px;box-sizing:border-box;border-top:3px solid #dff8f8;border-left:3px solid #dff8f8;border-bottom:3px solid #5a9898;border-right:3px solid #5a9898;background:#9ddcdc"></div>
<div class="abs" style="left:1323px;top:85px;width:29px;height:29px;box-sizing:border-box;border:1px solid #0c2420;background:#9ddcdc"></div>
<svg class="abs" style="left:1318px;top:80px" width="39" height="39" viewBox="0 0 39 39"><g transform="translate(20 19) scale(1.080) translate(-19.500 -18.500)"><rect x="12" y="10" width="14" height="14" stroke="#000" fill="none" stroke-width="2"/><path d="M19 32 L25 26 H22 V20 H16 V26 H13 Z" fill="#000"/></g></svg>
<div class="abs" style="left:1358px;top:80px;width:39px;height:39px;box-sizing:border-box;background:#9ddcdc;border:1px solid #000"></div>
<div class="abs" style="left:1359px;top:81px;width:37px;height:37px;box-sizing:border-box;border-top:3px solid #dff8f8;border-left:3px solid #dff8f8;border-bottom:3px solid #5a9898;border-right:3px solid #5a9898;background:#9ddcdc"></div>
<div class="abs" style="left:1363px;top:85px;width:29px;height:29px;box-sizing:border-box;border:1px solid #0c2420;background:#9ddcdc"></div>
<svg class="abs" style="left:1358px;top:80px" width="39" height="39" viewBox="0 0 39 39"><g transform="translate(20 19) scale(1.080) translate(-19.500 -18.500)"><path d="M10 20 L19 10 L28 20 M13 17 V29 H25 V17 M17 29 V22 H21 V29 M14.500 21.500 h2 M24 14 V9 M24.500 7.500 l1.500 -1.500" stroke="#000" fill="none" stroke-width="1.500"/></g></svg>
<div class="abs" style="left:1398px;top:80px;width:39px;height:39px;box-sizing:border-box;background:#9ddcdc;border:1px solid #000"></div>
<div class="abs" style="left:1399px;top:81px;width:37px;height:37px;box-sizing:border-box;border-top:3px solid #dff8f8;border-left:3px solid #dff8f8;border-bottom:3px solid #5a9898;border-right:3px solid #5a9898;background:#9ddcdc"></div>
<div class="abs" style="left:1403px;top:85px;width:29px;height:29px;box-sizing:border-box;border:1px solid #0c2420;background:#9ddcdc"></div>
<svg class="abs" style="left:1398px;top:80px" width="39" height="39" viewBox="0 0 39 39"><g transform="translate(20 19) scale(1.080) translate(-19.500 -18.500)"><rect x="9" y="9" width="21" height="21" stroke="#000" fill="none" stroke-width="2"/><path d="M19 9 V30 M9 23 H30" stroke="#000" fill="none" stroke-width="1.200"/><text x="21" y="22" font-family="Liberation Sans,sans-serif" font-size="5.500" font-weight="bold" fill="#000">XY</text></g></svg>
<div class="abs" style="left:1278px;top:120px;width:39px;height:39px;box-sizing:border-box;background:#9ddcdc;border:1px solid #000"></div>
<div class="abs" style="left:1279px;top:121px;width:37px;height:37px;box-sizing:border-box;border-top:3px solid #dff8f8;border-left:3px solid #dff8f8;border-bottom:3px solid #5a9898;border-right:3px solid #5a9898;background:#9ddcdc"></div>
<div class="abs" style="left:1283px;top:125px;width:29px;height:29px;box-sizing:border-box;border:1px solid #0c2420;background:#9ddcdc"></div>
<svg class="abs" style="left:1278px;top:120px" width="39" height="39" viewBox="0 0 39 39"><g transform="translate(20 19) scale(1.080) translate(-19.500 -18.500)"><rect x="12" y="12" width="14" height="14" stroke="#000" fill="none" stroke-width="2"/><path d="M5 19 L11 13 V16 H17 V22 H11 V25 Z" fill="#000"/></g></svg>
<div class="abs" style="left:1318px;top:120px;width:39px;height:39px;box-sizing:border-box;background:#9ddcdc;border:1px solid #000"></div>
<div class="abs" style="left:1319px;top:121px;width:37px;height:37px;box-sizing:border-box;border-top:3px solid #dff8f8;border-left:3px solid #dff8f8;border-bottom:3px solid #5a9898;border-right:3px solid #5a9898;background:#9ddcdc"></div>
<div class="abs" style="left:1323px;top:125px;width:29px;height:29px;box-sizing:border-box;border:1px solid #0c2420;background:#9ddcdc"></div>
<svg class="abs" style="left:1318px;top:120px" width="39" height="39" viewBox="0 0 39 39"><g transform="translate(20 19) scale(1.080) translate(-19.500 -18.500)"><rect x="10" y="12" width="14" height="14" stroke="#000" fill="none" stroke-width="2"/><path d="M31 19 L25 13 V16 H19 V22 H25 V25 Z" fill="#000"/></g></svg>
<div class="abs" style="left:1358px;top:120px;width:39px;height:39px;box-sizing:border-box;background:#9ddcdc;border:1px solid #000"></div>
<div class="abs" style="left:1359px;top:121px;width:37px;height:37px;box-sizing:border-box;border-top:3px solid #dff8f8;border-left:3px solid #dff8f8;border-bottom:3px solid #5a9898;border-right:3px solid #5a9898;background:#9ddcdc"></div>
<div class="abs" style="left:1363px;top:125px;width:29px;height:29px;box-sizing:border-box;border:1px solid #0c2420;background:#9ddcdc"></div>
<svg class="abs" style="left:1358px;top:120px" width="39" height="39" viewBox="0 0 39 39"><g transform="translate(20 19) scale(1.080) translate(-19.500 -18.500)"><rect x="18" y="13" width="12" height="12" stroke="#000" fill="none" stroke-width="2"/><path d="M9 25 h3 q4 0 4 -5 q0 -4 -4 -4 h-1" stroke="#000" fill="none" stroke-width="2.400"/><path d="M7 16 L12 12 V20 Z" fill="#000"/></g></svg>
<div class="abs" style="left:1398px;top:120px;width:39px;height:39px;box-sizing:border-box;background:#9ddcdc;border:1px solid #000"></div>
<div class="abs" style="left:1399px;top:121px;width:37px;height:37px;box-sizing:border-box;border-top:3px solid #dff8f8;border-left:3px solid #dff8f8;border-bottom:3px solid #5a9898;border-right:3px solid #5a9898;background:#9ddcdc"></div>
<div class="abs" style="left:1403px;top:125px;width:29px;height:29px;box-sizing:border-box;border:1px solid #0c2420;background:#9ddcdc"></div>
<svg class="abs" style="left:1398px;top:120px" width="39" height="39" viewBox="0 0 39 39"><g transform="translate(20 19) scale(1.080) translate(-19.500 -18.500)"><path d="M8 27 H28 V20 H12 V13 H30" stroke="#000" fill="none" stroke-width="2.200"/><path d="M30 13 l3 -3 M30 13 l3 3 M8 27 l-3 -3 M8 27 l-3 3" stroke="#000" fill="none" stroke-width="1"/></g></svg>
<div class="abs" style="left:1278px;top:160px;width:39px;height:39px;box-sizing:border-box;background:#9ddcdc;border:1px solid #000"></div>
<div class="abs" style="left:1279px;top:161px;width:37px;height:37px;box-sizing:border-box;border-top:3px solid #dff8f8;border-left:3px solid #dff8f8;border-bottom:3px solid #5a9898;border-right:3px solid #5a9898;background:#9ddcdc"></div>
<div class="abs" style="left:1283px;top:165px;width:29px;height:29px;box-sizing:border-box;border:1px solid #0c2420;background:#9ddcdc"></div>
<svg class="abs" style="left:1278px;top:160px" width="39" height="39" viewBox="0 0 39 39"><g transform="translate(20 19) scale(1.080) translate(-19.500 -18.500)"></g></svg>
<div class="abs" style="left:1318px;top:160px;width:39px;height:39px;box-sizing:border-box;background:#9ddcdc;border:1px solid #000"></div>
<div class="abs" style="left:1319px;top:161px;width:37px;height:37px;box-sizing:border-box;border-top:3px solid #dff8f8;border-left:3px solid #dff8f8;border-bottom:3px solid #5a9898;border-right:3px solid #5a9898;background:#9ddcdc"></div>
<div class="abs" style="left:1323px;top:165px;width:29px;height:29px;box-sizing:border-box;border:1px solid #0c2420;background:#9ddcdc"></div>
<svg class="abs" style="left:1318px;top:160px" width="39" height="39" viewBox="0 0 39 39"><g transform="translate(20 19) scale(1.080) translate(-19.500 -18.500)"><rect x="15" y="15" width="8" height="8" stroke="#000" fill="none" stroke-width="1.800"/><path d="M19 7 l-5 5 h10 Z M19 31 l-5 -5 h10 Z M7 19 l5 -5 v10 Z M31 19 l-5 -5 v10 Z" fill="#000"/></g></svg>
<div class="abs" style="left:1358px;top:160px;width:39px;height:39px;box-sizing:border-box;background:#9ddcdc;border:1px solid #000"></div>
<div class="abs" style="left:1359px;top:161px;width:37px;height:37px;box-sizing:border-box;border-top:3px solid #dff8f8;border-left:3px solid #dff8f8;border-bottom:3px solid #5a9898;border-right:3px solid #5a9898;background:#9ddcdc"></div>
<div class="abs" style="left:1363px;top:165px;width:29px;height:29px;box-sizing:border-box;border:1px solid #0c2420;background:#9ddcdc"></div>
<svg class="abs" style="left:1358px;top:160px" width="39" height="39" viewBox="0 0 39 39"><g transform="translate(20 19) scale(1.080) translate(-19.500 -18.500)"><text x="10.500" y="24" font-family="Liberation Sans,sans-serif" font-size="14" font-weight="bold" fill="#000" textLength="18" lengthAdjust="spacingAndGlyphs">1:2</text></g></svg>
<div class="abs" style="left:1398px;top:160px;width:39px;height:39px;box-sizing:border-box;background:#9ddcdc;border:1px solid #000"></div>
<div class="abs" style="left:1399px;top:161px;width:37px;height:37px;box-sizing:border-box;border-top:3px solid #dff8f8;border-left:3px solid #dff8f8;border-bottom:3px solid #5a9898;border-right:3px solid #5a9898;background:#9ddcdc"></div>
<div class="abs" style="left:1403px;top:165px;width:29px;height:29px;box-sizing:border-box;border:1px solid #0c2420;background:#9ddcdc"></div>
<svg class="abs" style="left:1398px;top:160px" width="39" height="39" viewBox="0 0 39 39"><g transform="translate(20 19) scale(1.080) translate(-19.500 -18.500)"><rect x="8.500" y="9.500" width="21" height="21" stroke="#000" fill="none" stroke-width="2.400"/><text x="14" y="26" font-family="Liberation Sans,sans-serif" font-size="15" font-weight="bold" fill="#000">?</text></g></svg>
<div class="abs" style="left:1278px;top:200px;width:39px;height:39px;box-sizing:border-box;background:#9ddcdc;border:1px solid #000"></div>
<div class="abs" style="left:1279px;top:201px;width:37px;height:37px;box-sizing:border-box;border-top:3px solid #dff8f8;border-left:3px solid #dff8f8;border-bottom:3px solid #5a9898;border-right:3px solid #5a9898;background:#9ddcdc"></div>
<div class="abs" style="left:1283px;top:205px;width:29px;height:29px;box-sizing:border-box;border:1px solid #0c2420;background:#9ddcdc"></div>
<svg class="abs" style="left:1278px;top:200px" width="39" height="39" viewBox="0 0 39 39"><g transform="translate(20 19) scale(1.080) translate(-19.500 -18.500)"></g></svg>
<div class="abs" style="left:1318px;top:200px;width:39px;height:39px;box-sizing:border-box;background:#9ddcdc;border:1px solid #000"></div>
<div class="abs" style="left:1319px;top:201px;width:37px;height:37px;box-sizing:border-box;border-top:3px solid #dff8f8;border-left:3px solid #dff8f8;border-bottom:3px solid #5a9898;border-right:3px solid #5a9898;background:#9ddcdc"></div>
<div class="abs" style="left:1323px;top:205px;width:29px;height:29px;box-sizing:border-box;border:1px solid #0c2420;background:#9ddcdc"></div>
<svg class="abs" style="left:1318px;top:200px" width="39" height="39" viewBox="0 0 39 39"><path d="M14.500 6 V33 M24 6 V33 M6 13.500 H33 M6 22.500 H33 M6 32 H33" stroke="#dca4a4" stroke-width="1" fill="none"/></svg>
<div class="abs" style="left:1358px;top:200px;width:39px;height:39px;box-sizing:border-box;background:#9ddcdc;border:1px solid #000"></div>
<div class="abs" style="left:1359px;top:201px;width:37px;height:37px;box-sizing:border-box;border-top:3px solid #dff8f8;border-left:3px solid #dff8f8;border-bottom:3px solid #5a9898;border-right:3px solid #5a9898;background:#9ddcdc"></div>
<div class="abs" style="left:1361px;top:203px;width:33px;height:33px;box-sizing:border-box;border:3px solid #c0201c;background:#9ddcdc"></div>
<svg class="abs" style="left:1358px;top:200px" width="39" height="39" viewBox="0 0 39 39"><g transform="translate(20 19) scale(1.080) translate(-19.500 -18.500)"><rect x="17" y="8" width="12" height="22" fill="#9ddcdc" stroke="#000" stroke-width="1.200"/><circle cx="23" cy="13" r="3.200" fill="#ee1111" stroke="#000" stroke-width="0.800"/><circle cx="23" cy="20" r="2.300" fill="#fff" stroke="#000"/><circle cx="23" cy="26" r="2.300" fill="#fff" stroke="#000"/><path d="M8 8 V18 H14 V24 M9 18 H6" stroke="#ee1111" stroke-width="1.200" fill="none"/><circle cx="8.500" cy="18" r="2.200" fill="#ee1111"/><path d="M15 10 V16 M15 22 V27 H10" stroke="#1111dd" stroke-width="1.200" fill="none"/><circle cx="15.500" cy="9.500" r="2.200" fill="#1111dd"/><circle cx="10" cy="27.500" r="2.200" fill="#1111dd"/></g></svg>
<div class="abs" style="left:1398px;top:200px;width:39px;height:39px;box-sizing:border-box;background:#9ddcdc;border:1px solid #000"></div>
<div class="abs" style="left:1399px;top:201px;width:37px;height:37px;box-sizing:border-box;border-top:3px solid #dff8f8;border-left:3px solid #dff8f8;border-bottom:3px solid #5a9898;border-right:3px solid #5a9898;background:#9ddcdc"></div>
<div class="abs" style="left:1401px;top:203px;width:33px;height:33px;box-sizing:border-box;border:3px solid #c0201c;background:#9ddcdc"></div>
<svg class="abs" style="left:1398px;top:200px" width="39" height="39" viewBox="0 0 39 39"><g transform="translate(20 19) scale(1.080) translate(-19.500 -18.500)"><rect x="17" y="8" width="12" height="22" fill="#9ddcdc" stroke="#000" stroke-width="1.200"/><circle cx="23" cy="13" r="3.200" fill="#ee1111" stroke="#000" stroke-width="0.800"/><circle cx="23" cy="20" r="2.300" fill="#fff" stroke="#000"/><circle cx="23" cy="26" r="2.300" fill="#fff" stroke="#000"/><path d="M8 8 V18 M15 10 V16 H8 M15 19 V27 H10" stroke="#000" stroke-width="1.200" fill="none"/><path d="M11 14 h4 M11 15.500 h4 M11 17 h4" stroke="#ee1111" stroke-width="0.800"/><circle cx="15.500" cy="9.500" r="2.200" fill="#000"/><circle cx="8.500" cy="18.500" r="2.200" fill="#000"/><circle cx="10" cy="27.500" r="2.200" fill="#000"/></g></svg>
<div class="abs" style="left:1277px;top:239px;width:163px;height:3px;background:#9ddcdc"></div>
<div class="abs" style="left:1277px;top:242px;width:1px;height:520px;background:#3fa88e"></div>
<svg class="abs" style="left:1278px;top:567px" width="162" height="114" viewBox="1278 567 162 114"><rect x="1278" y="567" width="162" height="113.500" fill="#fb0200"/><rect x="1278.500" y="567.500" width="162" height="112.500" fill="none" stroke="#c8a010" stroke-width="1"/>
<path d="M1285.8 572.3 L1430.4 572.3 L1430.4 653.2 L1380.4 653.2 L1380.4 671.4 L1370.1 671.4 L1370.1 659.0 L1366.7 659.0 L1366.7 671.4 L1350.8 671.4 L1350.8 655.6 L1348.4 652.2 L1345.0 655.6 L1345.0 664.5 L1333.6 664.5 L1333.6 653.2 L1307.1 653.2 L1307.1 664.5 L1285.8 664.5 Z" fill="none" stroke="#30d8e8" stroke-width="2.600" stroke-linejoin="round"/>
<path d="M1285.8 572.3 L1430.4 572.3 L1430.4 653.2 L1380.4 653.2 L1380.4 671.4 L1370.1 671.4 L1370.1 659.0 L1366.7 659.0 L1366.7 671.4 L1350.8 671.4 L1350.8 655.6 L1348.4 652.2 L1345.0 655.6 L1345.0 664.5 L1333.6 664.5 L1333.6 653.2 L1307.1 653.2 L1307.1 664.5 L1285.8 664.5 Z" fill="none" stroke="#a0a0a8" stroke-width="1.100" stroke-linejoin="round"/>
<path d="M1283.500 669 l6 6 M1289.500 669 l-6 6" stroke="#ffc0c0" stroke-width="1"/>
</svg>
<div class="abs" style="left:1277px;top:759px;width:163px;height:44px;box-sizing:border-box;background:#54ceb0;border-top:2px solid #a8f0dc;border-left:2px solid #a8f0dc"></div>
<div class="abs mono" style="left:1281px;top:767px;font-size:13.500px;line-height:15px;white-space:pre;letter-spacing:0.900px;color:#000">X = -9.380222mm
Y = 69.702312mm</div>
<div class="abs" style="left:1248px;top:244px;width:200px;height:259px;border-radius:7px;background:#1a1a1a;box-shadow:1px 2px 11px 2px rgba(0,0,0,0.900)"></div>
<div class="abs" style="left:1249px;top:245px;width:199px;height:257px;border-radius:6px;box-sizing:border-box;border:1px solid #cfd8d4;background:linear-gradient(180deg,#d2d8e2 0,#c6cedb 14px,#b8c0ce 27px,#3a4044 34px,#2a3030 100%)"></div>
<div class="abs" style="left:1356px;top:248px;width:44px;height:24px;border-radius:12px;background:radial-gradient(ellipse at center,rgba(20,20,25,0.800) 0,rgba(20,20,25,0.450) 45%,rgba(20,20,25,0) 75%)"></div>
<div class="abs" style="left:1278px;top:251px;font-size:13px;line-height:17px;color:#111;white-space:nowrap;text-shadow:0 0 6px #fff,0 0 4px #fff,0 0 2px #fff">Measure Popup</div>
<div class="abs" style="left:1394px;top:245px;width:48px;height:19px;box-sizing:border-box;border:1px solid #7a8894;border-top:0;border-radius:0 0 5px 5px;background:linear-gradient(180deg,#dde4ec 0,#c4ccd8 45%,#b0bac8 50%,#c0c8d4 100%)"></div>
<svg class="abs" style="left:1410px;top:248px" width="16" height="14" viewBox="0 0 16 14"><path d="M3 2.500 L12.500 11 M12.500 2.500 L3 11" stroke="#6a7078" stroke-width="4.200"/><path d="M3 2.500 L12.500 11 M12.500 2.500 L3 11" stroke="#fff" stroke-width="2.400"/></svg>
<div class="abs" style="left:1254px;top:271px;width:190px;height:227px;box-sizing:border-box;border:1px solid rgba(215,225,230,0.850);background:#000"></div>
<div class="abs" style="left:1256px;top:273px;width:184px;height:222px;background:#54ceb0"></div>
<div class="abs mono" style="left:1257px;top:274px;width:183px;height:17px;background:#9ddcdc;font-size:13.500px;line-height:20px;letter-spacing:0.900px;white-space:pre;padding-left:37.500px;box-sizing:border-box">Measure Mode</div>
<div class="abs" style="left:1257px;top:291px;width:183px;height:28px;box-sizing:border-box;background:#9ddcdc;border:1px solid #173f36"></div>
<div class="abs mono" style="left:1280.500px;top:297.5px;font-size:13.500px;line-height:16px;letter-spacing:0.900px;white-space:pre;color:#000">Between Points</div>
<svg class="abs" style="left:1263px;top:298px" width="14" height="14" viewBox="0 0 14 14"><path d="M7 1 L13 7 L7 13 L1 7 Z" fill="#9ddcdc"/><path d="M1 7 L7 1 L13 7" stroke="#e8fcfc" stroke-width="1.600" fill="none"/><path d="M1 7 L7 13 L13 7" stroke="#4a7c7c" stroke-width="1.600" fill="none"/></svg>
<div class="abs" style="left:1257px;top:320px;width:183px;height:28px;box-sizing:border-box;background:#9ddcdc;border:1px solid #173f36"></div>
<div class="abs mono" style="left:1280.500px;top:326.5px;font-size:13.500px;line-height:16px;letter-spacing:0.900px;white-space:pre;color:#000">Between Contours</div>
<svg class="abs" style="left:1263px;top:327px" width="14" height="14" viewBox="0 0 14 14"><path d="M7 1 L13 7 L7 13 L1 7 Z" fill="#c8104c"/><path d="M1 7 L7 1 L13 7" stroke="#5a8a8a" stroke-width="1.600" fill="none"/><path d="M1 7 L7 13 L13 7" stroke="#e8fcfc" stroke-width="1.600" fill="none"/></svg>
<div class="abs" style="left:1257px;top:349px;width:183px;height:28px;box-sizing:border-box;background:#9ddcdc;border:1px solid #173f36"></div>
<div class="abs mono" style="left:1280.500px;top:355.5px;font-size:13.500px;line-height:16px;letter-spacing:0.900px;white-space:pre;color:#000">Between Nets</div>
<svg class="abs" style="left:1263px;top:356px" width="14" height="14" viewBox="0 0 14 14"><path d="M7 1 L13 7 L7 13 L1 7 Z" fill="#9ddcdc"/><path d="M1 7 L7 1 L13 7" stroke="#e8fcfc" stroke-width="1.600" fill="none"/><path d="M1 7 L7 13 L13 7" stroke="#4a7c7c" stroke-width="1.600" fill="none"/></svg>
<div class="abs" style="left:1257px;top:378px;width:183px;height:28px;box-sizing:border-box;background:#9ddcdc;border:1px solid #173f36"></div>
<div class="abs mono" style="left:1280.500px;top:384.5px;font-size:13.500px;line-height:16px;letter-spacing:0.900px;white-space:pre;color:#000">Annular Ring</div>
<svg class="abs" style="left:1263px;top:385px" width="14" height="14" viewBox="0 0 14 14"><path d="M7 1 L13 7 L7 13 L1 7 Z" fill="#9ddcdc"/><path d="M1 7 L7 1 L13 7" stroke="#e8fcfc" stroke-width="1.600" fill="none"/><path d="M1 7 L7 13 L13 7" stroke="#4a7c7c" stroke-width="1.600" fill="none"/></svg>
<div class="abs" style="left:1257px;top:407px;width:183px;height:28px;box-sizing:border-box;background:#9ddcdc;border:1px solid #173f36"></div>
<div class="abs mono" style="left:1280.500px;top:413.5px;font-size:13.500px;line-height:16px;letter-spacing:0.900px;white-space:pre;color:#000">Between Midpoints</div>
<svg class="abs" style="left:1263px;top:414px" width="14" height="14" viewBox="0 0 14 14"><path d="M7 1 L13 7 L7 13 L1 7 Z" fill="#9ddcdc"/><path d="M1 7 L7 1 L13 7" stroke="#e8fcfc" stroke-width="1.600" fill="none"/><path d="M1 7 L7 13 L13 7" stroke="#4a7c7c" stroke-width="1.600" fill="none"/></svg>
<div class="abs" style="left:1257px;top:467px;width:183px;height:28px;box-sizing:border-box;background:#54ceb0;border-top:2px solid #000"></div>
<div class="abs mono" style="left:1259px;top:470px;width:181px;height:22px;box-sizing:border-box;background:#9ddcdc;border-top:2px solid #e6fafa;border-left:2px solid #e6fafa;border-bottom:2px solid #4a8c8c;text-align:center;font-size:13.500px;line-height:20px;letter-spacing:0.900px;padding-right:4px">Close</div>

<div class="abs" style="left:236px;top:100px;width:768px;height:447px;border-radius:7px;background:#0a0a0a;box-shadow:1px 2px 11px 2px rgba(0,0,0,0.900)"></div>
<div class="abs" style="left:237px;top:101px;width:766px;height:445px;border-radius:6px;box-sizing:border-box;border:1px solid #e8f0ea;background:linear-gradient(180deg,#c9cfcb 0px,#b4beb6 10px,#6fa060 20px,#4f9438 28px,#4d8048 100%)"></div>
<div class="abs" style="left:238px;top:129px;width:5px;height:412px;background:linear-gradient(180deg,#9aa89c 0,#2a2f2a 60px,#10181a 150px,#10181a 412px)"></div>
<div class="abs" style="left:998px;top:129px;width:4px;height:412px;background:linear-gradient(180deg,#8fb08a 0,#4a8a3a 120px,#3f8a2a 300px,#5a8a5a 410px)"></div>
<div class="abs" style="left:240px;top:542px;width:760px;height:3px;background:linear-gradient(90deg,#10181a,#1a2a1a 8%,#3a5a30 20%,#4a8a3a 45%,#2a3a2a 60%,#4a8a3a 75%,#5a8a5a)"></div>
<div class="abs" style="left:330px;top:103px;width:620px;height:24px;background:linear-gradient(90deg,rgba(20,20,20,0) 0,rgba(20,20,20,0.75) 12%,rgba(15,15,15,0.85) 60%,rgba(30,30,30,0.6) 100%);-webkit-mask-image:linear-gradient(180deg,#000 0,#000 45%,rgba(0,0,0,0) 100%);mask-image:linear-gradient(180deg,#000 0,#000 45%,rgba(0,0,0,0) 100%)"></div>
<svg class="abs" style="left:244px;top:108px" width="17" height="15" viewBox="0 0 17 15"><rect x="0.500" y="0.500" width="16" height="14" fill="#fff" stroke="#444"/><rect x="1" y="1" width="15" height="3" fill="#1a1a7a"/><path d="M4.500 6 L12.500 12 M12.500 6 L4.500 12" stroke="#c8c800" stroke-width="2.200"/></svg>
<div class="abs" style="left:265px;top:106px;font-size:13.100px;line-height:17px;color:#111;white-space:nowrap;text-shadow:0 0 6px #fff,0 0 3px #fff">Popview - 1</div>
<div class="abs" style="left:947px;top:101px;width:47px;height:18px;box-sizing:border-box;border:1px solid #5a1a10;border-top:0;border-radius:0 0 5px 5px;background:linear-gradient(180deg,#e8a898 0,#d4705c 45%,#c03a22 50%,#c8452c 100%);box-shadow:inset 0 0 0 1px rgba(255,255,255,0.35)"></div>
<svg class="abs" style="left:963px;top:103px" width="16" height="14" viewBox="0 0 16 14"><path d="M3 2.500 L12.500 11 M12.500 2.500 L3 11" stroke="#4a1a10" stroke-width="4.200"/><path d="M3 2.500 L12.500 11 M12.500 2.500 L3 11" stroke="#fff" stroke-width="2.400"/></svg>
<div class="abs" style="left:243px;top:127px;width:755px;height:415px;box-sizing:border-box;border:1px solid rgba(225,240,230,0.850);background:#000"></div>
<div class="abs" style="left:245px;top:129px;width:750px;height:410px;background:#54ceb0"></div>
<div class="abs" style="left:244px;top:129px;width:715px;height:381px;box-sizing:border-box;background:#000;border-top:4px solid #2e7a68;border-left:3px solid #2e7a68;border-right:2px solid #a8f0dc;border-bottom:3px solid #a8f0dc"></div>
<svg class="abs" style="left:247px;top:133px" width="710" height="374" viewBox="247 133 710 374">
<defs><pattern id="oh" width="2" height="2" patternUnits="userSpaceOnUse"><rect width="2" height="2" fill="#f0521a"/><rect width="1" height="1" fill="#ff6a22"/><rect x="1" y="1" width="1" height="1" fill="#e04012"/></pattern>
<pattern id="bh" width="2" height="2" patternUnits="userSpaceOnUse"><rect width="2" height="2" fill="#2aa4ea"/><rect width="1" height="1" fill="#52c0f6"/></pattern></defs>
<rect x="247" y="132" width="710" height="375" fill="#000"/>
<rect x="284.500" y="132" width="357.500" height="184" fill="#449a00"/>
<g fill="#000">
<rect x="307.5" y="175" width="10.300" height="141"/>
<rect x="340.8" y="175" width="10.300" height="141"/>
<rect x="374.1" y="175" width="10.300" height="141"/>
<rect x="407.4" y="175" width="10.300" height="141"/>
<rect x="440.7" y="175" width="10.300" height="141"/>
<rect x="474.0" y="175" width="10.300" height="141"/>
<rect x="507.3" y="175" width="10.300" height="141"/>
<rect x="540.6" y="175" width="10.300" height="141"/>
<rect x="573.9" y="175" width="10.300" height="141"/>
<rect x="607.2" y="175" width="10.300" height="141"/>
<rect x="284.500" y="169" width="105.500" height="6.500"/><rect x="376.500" y="166.500" width="13.500" height="9"/>
<rect x="403" y="169" width="87.500" height="6.500"/><rect x="403" y="166.500" width="12.500" height="9"/><rect x="476.500" y="166.500" width="14" height="9"/>
<rect x="503" y="169" width="139" height="6.500"/><rect x="503" y="166.500" width="13" height="9"/>
</g>
<path d="M275 130 V342 L292 361 H631 L647.500 342 V130" fill="none" stroke="#449a00" stroke-width="13.500" opacity="0.900" stroke-dasharray="1 1"/>
<path d="M275 130 V342 L292 361 H631 L647.500 342 V130" fill="none" stroke="url(#oh)" stroke-width="9"/>
<rect x="717" y="132" width="226" height="44" fill="#449a00"/>
<rect x="717" y="175" width="24" height="141" fill="#449a00"/>
<rect x="751" y="175" width="23" height="141" fill="#449a00"/>
<rect x="784" y="175" width="23" height="141" fill="#449a00"/>
<rect x="818" y="175" width="23" height="141" fill="#bb66ff"/>
<rect x="851" y="175" width="23" height="141" fill="#449a00"/>
<rect x="884" y="175" width="24" height="107" fill="#449a00"/>
<rect x="918" y="175" width="24" height="141" fill="#449a00"/>
<g fill="#000">
<rect x="717" y="169" width="38" height="6.500"/><rect x="743" y="166.500" width="12" height="9.500"/>
<rect x="770" y="169" width="30" height="6.500"/><rect x="770" y="166.500" width="12" height="9.500"/><rect x="793" y="132" width="7" height="43"/>
<rect x="808" y="132" width="9" height="184"/><rect x="807" y="175" width="11" height="141"/>
<rect x="825" y="132" width="7" height="43"/><rect x="825" y="169" width="30" height="6.500"/><rect x="842" y="166.500" width="13" height="9.500"/>
<rect x="870" y="169" width="20" height="6.500"/><rect x="870" y="166.500" width="12" height="9.500"/><rect x="883" y="132" width="7" height="43"/>
<rect x="903" y="132" width="7" height="43"/><rect x="903" y="169" width="20" height="6.500"/><rect x="910" y="166.500" width="13" height="9.500"/>
<rect x="936" y="169" width="7" height="6.500"/><rect x="941.500" y="132" width="3" height="44"/>
<rect x="741" y="176" width="10" height="140"/><rect x="774" y="176" width="10" height="140"/><rect x="841" y="176" width="10" height="140"/><rect x="874" y="176" width="10" height="140"/><rect x="908" y="176" width="10" height="140"/>
</g>
<path d="M711 130 V342 L727 361" fill="none" stroke="#449a00" stroke-width="13.500" opacity="0.900" stroke-dasharray="1 1"/>
<path d="M711 130 V342 L727 361" fill="none" stroke="url(#oh)" stroke-width="9"/>
<path d="M950 130 V342 L934 361" fill="none" stroke="#449a00" stroke-width="13.500" opacity="0.900" stroke-dasharray="1 1"/>
<path d="M950 130 V342 L934 361" fill="none" stroke="url(#oh)" stroke-width="9"/>
<rect x="724" y="357" width="214" height="9.500" fill="url(#bh)"/>
<path d="M722 357 H940 M724 366.500 H938" stroke="#449a00" stroke-width="1" stroke-dasharray="1 1" opacity="0.800"/>
<path d="M818.500 316 V357" stroke="#fff" stroke-width="1.200"/>
<text x="697" y="378" font-family="Liberation Mono, DejaVu Sans Mono, monospace" font-weight="bold" font-size="13.500" fill="#fff" textLength="253" lengthAdjust="spacing">DX=0,DY=-1.273175,D=1.273175</text>
</svg>
<div class="abs" style="left:960px;top:131px;width:35px;height:34px;box-sizing:border-box;background:#54ceb0;border:1px solid #1c5a4c"></div>
<div class="abs" style="left:961px;top:132px;width:33px;height:32px;box-sizing:border-box;border-top:3px solid #b8f4e4;border-left:3px solid #b8f4e4;border-bottom:3px solid #2e8a74;border-right:3px solid #2e8a74;background:#54ceb0"></div>
<div class="abs" style="left:966px;top:137px;width:23px;height:22px;box-sizing:border-box;border-top:1px solid #2e8a74;border-left:1px solid #2e8a74;border-bottom:1px solid #d8fcf4;border-right:1px solid #d8fcf4;background:#9ddcdc"></div>
<svg class="abs" style="left:962px;top:132px" width="32" height="32" viewBox="0 0 32 32"><rect x="9" y="11" width="10" height="9" fill="none" stroke="#000" stroke-width="2"/><rect x="17" y="7" width="7" height="6" fill="#9ddcdc" stroke="#000" stroke-width="1.200"/><path d="M11 15.500 h6 M11 15.500 l2.500 -2.500 M11 15.500 l2.500 2.500" stroke="#000" stroke-width="1.200" fill="none"/></svg>
<div class="abs" style="left:960px;top:166px;width:35px;height:34px;box-sizing:border-box;background:#54ceb0;border:1px solid #1c5a4c"></div>
<div class="abs" style="left:961px;top:167px;width:33px;height:32px;box-sizing:border-box;border-top:3px solid #b8f4e4;border-left:3px solid #b8f4e4;border-bottom:3px solid #2e8a74;border-right:3px solid #2e8a74;background:#54ceb0"></div>
<div class="abs" style="left:966px;top:172px;width:23px;height:22px;box-sizing:border-box;border-top:1px solid #2e8a74;border-left:1px solid #2e8a74;border-bottom:1px solid #d8fcf4;border-right:1px solid #d8fcf4;background:#9ddcdc"></div>
<svg class="abs" style="left:962px;top:167px" width="32" height="32" viewBox="0 0 32 32"><path d="M9 13 V22 H23 V13" fill="none" stroke="#000" stroke-width="2"/><path d="M16 5 L22 11 H19 V16 H13 V11 H10 Z" fill="#000"/></svg>
<div class="abs" style="left:960px;top:201px;width:35px;height:34px;box-sizing:border-box;background:#54ceb0;border:1px solid #1c5a4c"></div>
<div class="abs" style="left:961px;top:202px;width:33px;height:32px;box-sizing:border-box;border-top:3px solid #b8f4e4;border-left:3px solid #b8f4e4;border-bottom:3px solid #2e8a74;border-right:3px solid #2e8a74;background:#54ceb0"></div>
<div class="abs" style="left:966px;top:207px;width:23px;height:22px;box-sizing:border-box;border-top:1px solid #2e8a74;border-left:1px solid #2e8a74;border-bottom:1px solid #d8fcf4;border-right:1px solid #d8fcf4;background:#9ddcdc"></div>
<svg class="abs" style="left:962px;top:202px" width="32" height="32" viewBox="0 0 32 32"><rect x="9" y="8" width="14" height="11" fill="none" stroke="#000" stroke-width="2"/><path d="M16 25 L22 19 H19 V14 H13 V19 H10 Z" fill="#000"/></svg>
<div class="abs" style="left:960px;top:236px;width:35px;height:34px;box-sizing:border-box;background:#54ceb0;border:1px solid #1c5a4c"></div>
<div class="abs" style="left:961px;top:237px;width:33px;height:32px;box-sizing:border-box;border-top:3px solid #b8f4e4;border-left:3px solid #b8f4e4;border-bottom:3px solid #2e8a74;border-right:3px solid #2e8a74;background:#54ceb0"></div>
<div class="abs" style="left:966px;top:242px;width:23px;height:22px;box-sizing:border-box;border-top:1px solid #2e8a74;border-left:1px solid #2e8a74;border-bottom:1px solid #d8fcf4;border-right:1px solid #d8fcf4;background:#9ddcdc"></div>
<svg class="abs" style="left:962px;top:237px" width="32" height="32" viewBox="0 0 32 32"><rect x="12" y="8" width="11" height="15" fill="none" stroke="#000" stroke-width="2"/><path d="M6 15.500 L12 9.500 V12.500 H17 V18.500 H12 V21.500 Z" fill="#000"/></svg>
<div class="abs" style="left:960px;top:271px;width:35px;height:34px;box-sizing:border-box;background:#54ceb0;border:1px solid #1c5a4c"></div>
<div class="abs" style="left:961px;top:272px;width:33px;height:32px;box-sizing:border-box;border-top:3px solid #b8f4e4;border-left:3px solid #b8f4e4;border-bottom:3px solid #2e8a74;border-right:3px solid #2e8a74;background:#54ceb0"></div>
<div class="abs" style="left:966px;top:277px;width:23px;height:22px;box-sizing:border-box;border-top:1px solid #2e8a74;border-left:1px solid #2e8a74;border-bottom:1px solid #d8fcf4;border-right:1px solid #d8fcf4;background:#9ddcdc"></div>
<svg class="abs" style="left:962px;top:272px" width="32" height="32" viewBox="0 0 32 32"><rect x="8" y="8" width="11" height="15" fill="none" stroke="#000" stroke-width="2"/><path d="M26 15.500 L20 9.500 V12.500 H15 V18.500 H20 V21.500 Z" fill="#000"/></svg>
<div class="abs" style="left:960px;top:306px;width:35px;height:34px;box-sizing:border-box;background:#54ceb0;border:1px solid #1c5a4c"></div>
<div class="abs" style="left:961px;top:307px;width:33px;height:32px;box-sizing:border-box;border-top:3px solid #b8f4e4;border-left:3px solid #b8f4e4;border-bottom:3px solid #2e8a74;border-right:3px solid #2e8a74;background:#54ceb0"></div>
<div class="abs" style="left:966px;top:312px;width:23px;height:22px;box-sizing:border-box;border-top:1px solid #2e8a74;border-left:1px solid #2e8a74;border-bottom:1px solid #d8fcf4;border-right:1px solid #d8fcf4;background:#9ddcdc"></div>
<svg class="abs" style="left:962px;top:307px" width="32" height="32" viewBox="0 0 32 32"><rect x="12.500" y="12.500" width="7" height="7" fill="none" stroke="#000" stroke-width="1.500"/><path d="M6 6 l6 2 l-4 4 Z M26 6 l-6 2 l4 4 Z M6 26 l6 -2 l-4 -4 Z M26 26 l-6 -2 l4 -4 Z M16 11 l-4 -5 h8 Z M16 21 l-4 5 h8 Z M11 16 l-5 -4 v8 Z M21 16 l5 -4 v8 Z" fill="#000"/></svg>
<div class="abs" style="left:960px;top:341px;width:35px;height:34px;box-sizing:border-box;background:#54ceb0;border:1px solid #1c5a4c"></div>
<div class="abs" style="left:961px;top:342px;width:33px;height:32px;box-sizing:border-box;border-top:3px solid #b8f4e4;border-left:3px solid #b8f4e4;border-bottom:3px solid #2e8a74;border-right:3px solid #2e8a74;background:#54ceb0"></div>
<div class="abs" style="left:966px;top:347px;width:23px;height:22px;box-sizing:border-box;border-top:1px solid #2e8a74;border-left:1px solid #2e8a74;border-bottom:1px solid #d8fcf4;border-right:1px solid #d8fcf4;background:#9ddcdc"></div>
<svg class="abs" style="left:962px;top:342px" width="32" height="32" viewBox="0 0 32 32"><rect x="12.500" y="12.500" width="7" height="7" fill="none" stroke="#000" stroke-width="1.500"/><path d="M16 6 l-4 5 h8 Z M16 26 l-4 -5 h8 Z M6 16 l5 -4 v8 Z M26 16 l-5 -4 v8 Z" fill="#000"/></svg>
<div class="abs" style="left:245px;top:510px;width:750px;height:29px;box-sizing:border-box;background:#54ceb0;border-top:2px solid #000"></div>
<div class="abs mono" style="left:247px;top:513px;width:746px;height:24px;box-sizing:border-box;background:#9ddcdc;border-top:2px solid #e6fafa;border-left:2px solid #e6fafa;border-bottom:2px solid #4a8c8c;border-right:2px solid #4a8c8c;text-align:center;font-size:13.500px;line-height:20px;letter-spacing:0.900px">Close</div>

<div class="abs" style="left:1086px;top:133px;width:230px;height:157px;box-sizing:border-box;background:#fff;border:3px solid #0a0ad8;border-top-width:3px"></div>
<div class="abs" style="left:1094px;top:141px;width:215px;font-family:'Noto Serif CJK SC','Noto Sans CJK SC',serif;font-weight:300;font-size:34.500px;line-height:36px;color:#e818e0;white-space:nowrap;letter-spacing:0px">外层手指没削<br>铜</div>

<div class="abs" style="left:0;top:803px;width:1440px;height:36px;background:#000"></div>
<div class="abs" style="left:0;top:839px;width:1440px;height:31px;background:#6f9494"></div>
<div class="abs" style="left:0;top:868px;width:1440px;height:2px;background:#dfeef4"></div>
<div class="abs" style="left:0;top:78px;width:1px;height:790px;background:#5f8a88"></div>
<div class="abs" style="left:1px;top:805px;width:1359px;height:33px;background:#ffffd0"></div>
<div class="abs" style="left:2px;top:805px;width:31px;height:33px;box-sizing:border-box;background:#ffffd0;border:1px solid #3a3a2a;border-top:0;border-left:0"></div>
<div class="abs" style="left:4px;top:807px;width:26px;height:29px;box-sizing:border-box;background:#ffffd0;border-top:2px solid #fffff0;border-left:2px solid #fffff0;border-bottom:2px solid #dcdcb0;border-right:2px solid #dcdcb0"></div>
<div class="abs" style="left:34px;top:805px;width:31px;height:33px;box-sizing:border-box;background:#ffffd0;border:1px solid #3a3a2a;border-top:0;border-left:0"></div>
<div class="abs" style="left:36px;top:807px;width:26px;height:29px;box-sizing:border-box;background:#ffffd0;border-top:2px solid #fffff0;border-left:2px solid #fffff0;border-bottom:2px solid #dcdcb0;border-right:2px solid #dcdcb0"></div>
<div class="abs" style="left:65px;top:805px;width:30px;height:33px;box-sizing:border-box;background:#54ceb0;border:1px solid #2a6a5a"></div>
<div class="abs" style="left:68px;top:808px;width:24px;height:27px;box-sizing:border-box;background:#ffffd0;border-top:2px solid #b4b48c;border-left:2px solid #b4b48c;border-bottom:2px solid #fffff0;border-right:2px solid #fffff0"></div>
<svg class="abs" style="left:6px;top:809px" width="24" height="25" viewBox="0 0 24 25"><rect x="1.500" y="1.500" width="20" height="20" stroke="#000" fill="none" stroke-width="1.200"/><path d="M4.500 4 V18.500 H19 M6.500 6 L17 16.500 M6.500 6 v4 M6.500 6 h4 M17 16.500 v-4 M17 16.500 h-4" stroke="#000" fill="none" stroke-width="1.200"/></svg>
<svg class="abs" style="left:38px;top:809px" width="24" height="25" viewBox="0 0 24 25"><rect x="1.500" y="1.500" width="20" height="20" stroke="#000" fill="none" stroke-width="1.200"/><path d="M4 18.500 L17 4 M4 18.500 H19 M8 8 v3.500 h3 M9 15 q2 1 2.500 3.500" stroke="#000" fill="none" stroke-width="1.300"/><text x="12.500" y="17" font-family="Liberation Sans,sans-serif" font-size="5.500" font-weight="bold" fill="#000">DC</text></svg>
<svg class="abs" style="left:70px;top:811px" width="20" height="21" viewBox="0 0 20 21"><rect x="2.500" y="2.500" width="15" height="15" stroke="#000" fill="none" stroke-width="1.200"/><path d="M5 8 L8.500 4.500 H15.500 V15.500 H5 Z M5 10 H15.500 M10 4.500 V15.500" stroke="#000" fill="none" stroke-width="1.200"/></svg>
<div class="abs serif" style="left:98px;top:812px;font-size:12px;line-height:18px;letter-spacing:1.500px;white-space:pre;color:#000">X Y :</div>
<div class="abs" style="left:143px;top:805px;width:1px;height:33px;background:#55553a"></div>
<div class="abs" style="left:145px;top:807px;width:171px;height:29px;box-sizing:border-box;background:#ffffd0;border-top:2px solid #8a8a5a;border-left:2px solid #8a8a5a;border-bottom:2px solid #e0e0b0;border-right:2px solid #e0e0b0;outline:1px solid #d0d0a0"></div>
<svg class="abs" style="left:148px;top:811px" width="7" height="14" viewBox="0 0 7 14"><path d="M1 0.500 h5 M1 12.500 h5" stroke="#000" stroke-width="1"/><path d="M3.500 1 V12" stroke="#000" stroke-width="1" stroke-dasharray="1 1"/></svg>
<div class="abs" style="left:316px;top:805px;width:2px;height:33px;background:#55553a"></div>
<div class="abs" style="left:318px;top:805px;width:29px;height:33px;box-sizing:border-box;background:#54ceb0;border:1px solid #2a6a5a"></div>
<div class="abs" style="left:321px;top:808px;width:23px;height:27px;box-sizing:border-box;background:#ffffd0;border-top:2px solid #fff;border-left:2px solid #fff;border-bottom:2px solid #a0a070;border-right:2px solid #a0a070"></div>
<svg class="abs" style="left:324px;top:811px" width="17" height="21" viewBox="0 0 17 21"><rect x="0.500" y="0.500" width="16" height="20" stroke="#000" fill="none" stroke-width="1.200"/><path d="M8.500 4 V13" stroke="#000" stroke-width="2"/><rect x="7.500" y="15" width="2" height="2.500" fill="#000"/></svg>
<div class="abs" style="left:347px;top:805px;width:2px;height:33px;background:#55553a"></div>
<div class="abs mono" style="left:352px;top:813px;line-height:16px;white-space:pre;color:#000;font-size:11.670px">&lt;M1&gt; - Select first contour ; &lt;Ctrl&gt;&lt;M1&gt; - Re-select second contour</div>
<div class="abs" style="left:1361px;top:806px;width:77px;height:31px;box-sizing:border-box;background:#54ceb0;border:1px solid #1c5a4c"></div>
<div class="abs" style="left:1367px;top:809px;width:69px;height:25px;box-sizing:border-box;background:#54ceb0;border-top:2px solid #a8f0dc;border-left:2px solid #a8f0dc;border-bottom:2px solid #2e8a74;border-right:2px solid #2e8a74"></div>
<div class="abs mono" style="left:1373px;top:813px;font-size:14.500px;line-height:17px;white-space:pre;color:#000">MM</div>
<div class="abs" style="left:1417px;top:818px;width:12px;height:7px;box-sizing:border-box;background:#54ceb0;border-top:2px solid #a8f0dc;border-left:2px solid #a8f0dc;border-bottom:2px solid #2e8a74;border-right:2px solid #2e8a74"></div>
<div class="abs" style="left:2px;top:841px;width:1435px;height:27px;box-sizing:border-box;background:#b4ffff;border:1px solid #000"></div>
<div class="abs" style="left:3px;top:842px;width:1433px;height:25px;box-sizing:border-box;background:#b4ffff;border-top:2px solid #e6ffff;border-left:2px solid #e6ffff;border-bottom:2px solid #5a9a9a;border-right:2px solid #5a9a9a"></div>
<div class="abs mono" style="left:622px;top:846px;font-size:11.670px;line-height:16px;white-space:pre;color:#000">DX=0,DY=-1.273175,D=1.273175</div>

<div class="abs" style="left:0;top:870px;width:1440px;height:30px;background:linear-gradient(180deg,#9db4c8 0,#7d99b3 2px,#6a87a2 8px,#56738f 15px,#4c6985 30px)"></div>
<div class="abs" style="left:0;top:869px;width:1440px;height:1px;background:#2a3a48"></div>
<div class="abs" style="left:0;top:870px;width:1440px;height:1px;background:#b8c8d6"></div>
<svg class="abs" style="left:6px;top:864px" width="44" height="36" viewBox="0 0 44 36"><defs><radialGradient id="orb" cx="50%" cy="35%" r="60%"><stop offset="0" stop-color="#9fd0f0"/><stop offset="0.550" stop-color="#3a7ab8"/><stop offset="1" stop-color="#173a6a"/></radialGradient></defs><circle cx="21" cy="21" r="18" fill="#2a4a6a" opacity="0.600"/><circle cx="21" cy="21" r="16.500" fill="url(#orb)" stroke="#c8e0f4" stroke-width="1.200"/><path d="M12 13 q4 -3 8 -1 l-1.500 8 q-4 -2 -8 1 Z" fill="#e8502a"/><path d="M22 12.500 q4 2 8 -1 l-1.500 8 q-4 3 -8 1 Z" fill="#7ab82a"/><path d="M10 23 q4 -3 8 -1 l-1.500 8 q-4 -2 -8 1 Z" fill="#3a8ae0"/><path d="M20 22.500 q4 2 8 -1 l-1.500 8 q-4 3 -8 1 Z" fill="#f4c020"/></svg>
<div class="abs" style="left:60px;top:871px;width:56px;height:28px;box-sizing:border-box;border:1px solid #2c3f52;border-radius:3px;background:linear-gradient(180deg,rgba(255,255,255,0.300) 0,rgba(255,255,255,0.140) 45%,rgba(255,255,255,0.030) 50%,rgba(255,255,255,0.100) 100%);box-shadow:inset 0 0 0 1px rgba(255,255,255,0.350)"></div>
<svg class="abs" style="left:65.0px;top:877px" width="18" height="17" viewBox="0 0 18 17"><path d="M1 1 H14 L17 4 V16 H1 Z" fill="#1a3ac8"/><rect x="4" y="1" width="8" height="5" fill="#e8ecf8"/><rect x="3" y="9" width="12" height="7" fill="#fff"/><path d="M3 11 h12 M3 13.500 h12" stroke="#e02020" stroke-width="1.400"/></svg>
<div class="abs" style="left:85.5px;top:877px;font-size:13.500px;line-height:17px;color:#fff;white-space:nowrap;font-family:'Liberation Sans','Noto Sans CJK SC',sans-serif">To...</div>
<div class="abs" style="left:120px;top:871px;width:56px;height:28px;box-sizing:border-box;border:1px solid #2c3f52;border-radius:3px;background:linear-gradient(180deg,rgba(255,255,255,0.300) 0,rgba(255,255,255,0.140) 45%,rgba(255,255,255,0.030) 50%,rgba(255,255,255,0.100) 100%);box-shadow:inset 0 0 0 1px rgba(255,255,255,0.350)"></div>
<svg class="abs" style="left:125.0px;top:877px" width="18" height="17" viewBox="0 0 18 17"><path d="M14 2 q-3 -1 -4 2 q-7 -1 -8 5 q0 6 7 6 q6 0 6 -5 q0 -2 -3 -3 q3 -1 2 -5 Z M6 8 q3 -2 5 1 q0 3 -3 3 q-3 0 -2 -4 Z" fill="#e03018" fill-rule="evenodd"/></svg>
<div class="abs" style="left:145.5px;top:877px;font-size:13.500px;line-height:17px;color:#fff;white-space:nowrap;font-family:'Liberation Sans','Noto Sans CJK SC',sans-serif">Fo...</div>
<div class="abs" style="left:180px;top:871px;width:56px;height:28px;box-sizing:border-box;border:1px solid #2c3f52;border-radius:3px;background:linear-gradient(180deg,rgba(255,255,255,0.300) 0,rgba(255,255,255,0.140) 45%,rgba(255,255,255,0.030) 50%,rgba(255,255,255,0.100) 100%);box-shadow:inset 0 0 0 1px rgba(255,255,255,0.350)"></div>
<svg class="abs" style="left:185.0px;top:877px" width="18" height="17" viewBox="0 0 18 17"><rect x="3" y="1" width="12" height="15" fill="#e8f4ff" stroke="#5a9ad8"/><path d="M4 4 h10 M4 7 h10 M4 10 h10 M4 13 h10" stroke="#3a8ad8" stroke-width="1.800"/></svg>
<div class="abs" style="left:205.5px;top:877px;font-size:13.500px;line-height:17px;color:#fff;white-space:nowrap;font-family:'Liberation Sans','Noto Sans CJK SC',sans-serif">制...</div>
<div class="abs" style="left:240px;top:871px;width:56px;height:28px;box-sizing:border-box;border:1px solid #2c3f52;border-radius:3px;background:linear-gradient(180deg,rgba(255,255,255,0.300) 0,rgba(255,255,255,0.140) 45%,rgba(255,255,255,0.030) 50%,rgba(255,255,255,0.100) 100%);box-shadow:inset 0 0 0 1px rgba(255,255,255,0.350)"></div>
<svg class="abs" style="left:245.0px;top:877px" width="18" height="17" viewBox="0 0 18 17"><path d="M9 0.500 L11.500 6 L17.500 6.500 L13 10.500 L14.500 16.500 L9 13.500 L3.500 16.500 L5 10.500 L0.500 6.500 L6.500 6 Z" fill="#f09020"/><circle cx="9" cy="9" r="3" fill="#d83018"/></svg>
<div class="abs" style="left:265.5px;top:877px;font-size:13.500px;line-height:17px;color:#fff;white-space:nowrap;font-family:'Liberation Sans','Noto Sans CJK SC',sans-serif">兴...</div>
<div class="abs" style="left:300px;top:871px;width:114px;height:28px;box-sizing:border-box;border:1px solid #2c3f52;border-radius:3px;background:linear-gradient(180deg,rgba(255,255,255,0.300) 0,rgba(255,255,255,0.140) 45%,rgba(255,255,255,0.030) 50%,rgba(255,255,255,0.100) 100%);box-shadow:inset 0 0 0 1px rgba(255,255,255,0.350)"></div>
<svg class="abs" style="left:305.0px;top:877px" width="18" height="17" viewBox="0 0 18 17"><path d="M5 1 H14 L17 4 V16 H5 Z" fill="#f4f8ff" stroke="#7a8ab0"/><rect x="0.500" y="4" width="11" height="9" fill="#2a4ab0"/><text x="1.500" y="11.500" font-family="Liberation Sans,sans-serif" font-size="8" font-weight="bold" fill="#fff">W</text></svg>
<div class="abs" style="left:325.5px;top:877px;font-size:13.500px;line-height:17px;color:#fff;white-space:nowrap;font-family:'Liberation Sans','Noto Sans CJK SC',sans-serif">20...</div>
<div class="abs" style="left:357.0px;top:874px;width:1px;height:23px;background:rgba(40,60,80,0.600)"></div>
<svg class="abs" style="left:362.0px;top:877px" width="18" height="17" viewBox="0 0 18 17"><path d="M5 1 H14 L17 4 V16 H5 Z" fill="#f4f8ff" stroke="#7a8ab0"/><rect x="0.500" y="4" width="11" height="9" fill="#2a4ab0"/><text x="1.500" y="11.500" font-family="Liberation Sans,sans-serif" font-size="8" font-weight="bold" fill="#fff">W</text></svg>
<div class="abs" style="left:382.5px;top:877px;font-size:13.500px;line-height:17px;color:#fff;white-space:nowrap;font-family:'Liberation Sans','Noto Sans CJK SC',sans-serif">8v...</div>
<div class="abs" style="left:418px;top:871px;width:56px;height:28px;box-sizing:border-box;border:1px solid #2c3f52;border-radius:3px;background:linear-gradient(180deg,rgba(255,255,255,0.300) 0,rgba(255,255,255,0.140) 45%,rgba(255,255,255,0.030) 50%,rgba(255,255,255,0.100) 100%);box-shadow:inset 0 0 0 1px rgba(255,255,255,0.350)"></div>
<svg class="abs" style="left:423.0px;top:877px" width="18" height="17" viewBox="0 0 18 17"><ellipse cx="9" cy="9.500" rx="8" ry="5.500" fill="#1a9a8a"/><ellipse cx="9" cy="9.500" rx="4" ry="3" fill="#0a3a5a"/><path d="M1 5 l4 -3 h5" stroke="#1a4a9a" stroke-width="2" fill="none"/></svg>
<div class="abs" style="left:443.5px;top:877px;font-size:13.500px;line-height:17px;color:#fff;white-space:nowrap;font-family:'Liberation Sans','Noto Sans CJK SC',sans-serif">CA...</div>
<div class="abs" style="left:478px;top:871px;width:56px;height:28px;box-sizing:border-box;border:1px solid #2c3f52;border-radius:3px;background:linear-gradient(180deg,rgba(255,255,255,0.300) 0,rgba(255,255,255,0.140) 45%,rgba(255,255,255,0.030) 50%,rgba(255,255,255,0.100) 100%);box-shadow:inset 0 0 0 1px rgba(255,255,255,0.350)"></div>
<svg class="abs" style="left:483.0px;top:877px" width="18" height="17" viewBox="0 0 18 17"><path d="M4 16 L7 2 H14 Q18 2 17 6 Q16 10 11 10 H8 L7 16 Z M9 5 L8.500 7.500 H12 Q13.500 7.500 13.500 6 Q13.500 5 12.500 5 Z" fill="#28a858" fill-rule="evenodd"/></svg>
<div class="abs" style="left:503.5px;top:877px;font-size:13.500px;line-height:17px;color:#fff;white-space:nowrap;font-family:'Liberation Sans','Noto Sans CJK SC',sans-serif">工...</div>
<div class="abs" style="left:537px;top:871px;width:230px;height:28px;box-sizing:border-box;border:1px solid #2c3f52;border-radius:3px;background:linear-gradient(180deg,rgba(255,255,255,0.300) 0,rgba(255,255,255,0.140) 45%,rgba(255,255,255,0.030) 50%,rgba(255,255,255,0.100) 100%);box-shadow:inset 0 0 0 1px rgba(255,255,255,0.350)"></div>
<svg class="abs" style="left:542.0px;top:877px" width="18" height="17" viewBox="0 0 18 17"><path d="M5 1 H14 L17 4 V16 H5 Z" fill="#f4f8ff" stroke="#7a8ab0"/><rect x="0.500" y="3" width="11" height="10" fill="#1a8a3a"/><path d="M3 5 L9 11 M9 5 L3 11" stroke="#fff" stroke-width="1.600"/></svg>
<div class="abs" style="left:562.5px;top:877px;font-size:13.500px;line-height:17px;color:#fff;white-space:nowrap;font-family:'Liberation Sans','Noto Sans CJK SC',sans-serif">8V...</div>
<div class="abs" style="left:594.5px;top:874px;width:1px;height:23px;background:rgba(40,60,80,0.600)"></div>
<svg class="abs" style="left:599.5px;top:877px" width="18" height="17" viewBox="0 0 18 17"><path d="M5 1 H14 L17 4 V16 H5 Z" fill="#f4f8ff" stroke="#7a8ab0"/><rect x="0.500" y="3" width="11" height="10" fill="#1a8a3a"/><path d="M3 5 L9 11 M9 5 L3 11" stroke="#fff" stroke-width="1.600"/></svg>
<div class="abs" style="left:620.0px;top:877px;font-size:13.500px;line-height:17px;color:#fff;white-space:nowrap;font-family:'Liberation Sans','Noto Sans CJK SC',sans-serif">8V...</div>
<div class="abs" style="left:652.0px;top:874px;width:1px;height:23px;background:rgba(40,60,80,0.600)"></div>
<svg class="abs" style="left:657.0px;top:877px" width="18" height="17" viewBox="0 0 18 17"><path d="M5 1 H14 L17 4 V16 H5 Z" fill="#f4f8ff" stroke="#7a8ab0"/><rect x="0.500" y="3" width="11" height="10" fill="#1a8a3a"/><path d="M3 5 L9 11 M9 5 L3 11" stroke="#fff" stroke-width="1.600"/></svg>
<div class="abs" style="left:677.5px;top:877px;font-size:13.500px;line-height:17px;color:#fff;white-space:nowrap;font-family:'Liberation Sans','Noto Sans CJK SC',sans-serif">Q3...</div>
<div class="abs" style="left:709.5px;top:874px;width:1px;height:23px;background:rgba(40,60,80,0.600)"></div>
<svg class="abs" style="left:714.5px;top:877px" width="18" height="17" viewBox="0 0 18 17"><path d="M5 1 H14 L17 4 V16 H5 Z" fill="#f4f8ff" stroke="#7a8ab0"/><rect x="0.500" y="3" width="11" height="10" fill="#1a8a3a"/><path d="M3 5 L9 11 M9 5 L3 11" stroke="#fff" stroke-width="1.600"/></svg>
<div class="abs" style="left:735.0px;top:877px;font-size:13.500px;line-height:17px;color:#fff;white-space:nowrap;font-family:'Liberation Sans','Noto Sans CJK SC',sans-serif">常...</div>
<div class="abs" style="left:772px;top:871px;width:56px;height:28px;box-sizing:border-box;border:1px solid #2c3f52;border-radius:3px;background:linear-gradient(180deg,rgba(255,255,255,0.300) 0,rgba(255,255,255,0.140) 45%,rgba(255,255,255,0.030) 50%,rgba(255,255,255,0.100) 100%);box-shadow:inset 0 0 0 1px rgba(255,255,255,0.350)"></div>
<svg class="abs" style="left:777.0px;top:877px" width="18" height="17" viewBox="0 0 18 17"><rect x="1" y="1" width="16" height="15" rx="2" fill="#2a8ae0"/><path d="M5 14 L7 6 Q8 3 12 3 H16 L15.500 6 H12 Q10.500 6 10.300 7 H14 L13.500 9.500 H9.700 L8.500 14 Z" fill="#fff"/></svg>
<div class="abs" style="left:797.5px;top:877px;font-size:13.500px;line-height:17px;color:#fff;white-space:nowrap;font-family:'Liberation Sans','Noto Sans CJK SC',sans-serif">左...</div>
<div class="abs" style="left:832px;top:871px;width:56px;height:28px;box-sizing:border-box;border:1px solid #2c3f52;border-radius:3px;background:linear-gradient(180deg,rgba(255,255,255,0.300) 0,rgba(255,255,255,0.140) 45%,rgba(255,255,255,0.030) 50%,rgba(255,255,255,0.100) 100%);box-shadow:inset 0 0 0 1px rgba(255,255,255,0.350)"></div>
<svg class="abs" style="left:837.0px;top:877px" width="18" height="17" viewBox="0 0 18 17"><circle cx="9" cy="9" r="7.500" fill="#1a5ab0"/><circle cx="9" cy="9" r="5" fill="#e8d020"/><circle cx="9" cy="9" r="3" fill="#28a848"/><path d="M2 3 l3 3 M16 3 l-3 3" stroke="#102a6a" stroke-width="2"/></svg>
<div class="abs" style="left:857.5px;top:877px;font-size:13.500px;line-height:17px;color:#fff;white-space:nowrap;font-family:'Liberation Sans','Noto Sans CJK SC',sans-serif">Ge...</div>
<div class="abs" style="left:892px;top:871px;width:171px;height:28px;box-sizing:border-box;border:1px solid #2c3f52;border-radius:3px;background:linear-gradient(180deg,rgba(255,255,255,0.300) 0,rgba(255,255,255,0.140) 45%,rgba(255,255,255,0.030) 50%,rgba(255,255,255,0.100) 100%);box-shadow:inset 0 0 0 1px rgba(255,255,255,0.350)"></div>
<svg class="abs" style="left:897.0px;top:877px" width="18" height="17" viewBox="0 0 18 17"><rect x="0.500" y="1.500" width="17" height="14" fill="#fff" stroke="#444"/><rect x="1" y="2" width="16" height="3" fill="#1a1a7a"/><path d="M5 7 L13 13.500 M13 7 L5 13.500" stroke="#c8c800" stroke-width="2.200"/></svg>
<div class="abs" style="left:917.5px;top:877px;font-size:13.500px;line-height:17px;color:#fff;white-space:nowrap;font-family:'Liberation Sans','Noto Sans CJK SC',sans-serif">En...</div>
<div class="abs" style="left:950.0px;top:873px;width:56.0px;height:25px;background:linear-gradient(180deg,rgba(255,255,255,0.500),rgba(255,255,255,0.250))"></div>
<div class="abs" style="left:949.0px;top:874px;width:1px;height:23px;background:rgba(40,60,80,0.600)"></div>
<svg class="abs" style="left:954.0px;top:877px" width="18" height="17" viewBox="0 0 18 17"><rect x="0.500" y="1.500" width="17" height="14" fill="#fff" stroke="#444"/><rect x="1" y="2" width="16" height="3" fill="#1a1a7a"/><path d="M5 7 L13 13.500 M13 7 L5 13.500" stroke="#c8c800" stroke-width="2.200"/></svg>
<div class="abs" style="left:974.5px;top:877px;font-size:13.500px;line-height:17px;color:#fff;white-space:nowrap;font-family:'Liberation Sans','Noto Sans CJK SC',sans-serif">Gr...</div>
<div class="abs" style="left:1006.0px;top:874px;width:1px;height:23px;background:rgba(40,60,80,0.600)"></div>
<svg class="abs" style="left:1011.0px;top:877px" width="18" height="17" viewBox="0 0 18 17"><rect x="0.500" y="1.500" width="17" height="14" fill="#fff" stroke="#444"/><rect x="1" y="2" width="16" height="3" fill="#1a1a7a"/><path d="M5 7 L13 13.500 M13 7 L5 13.500" stroke="#c8c800" stroke-width="2.200"/></svg>
<div class="abs" style="left:1031.5px;top:877px;font-size:13.500px;line-height:17px;color:#fff;white-space:nowrap;font-family:'Liberation Sans','Noto Sans CJK SC',sans-serif">Pr...</div>
<div class="abs" style="left:1068px;top:871px;width:55px;height:28px;box-sizing:border-box;border:1px solid #2c3f52;border-radius:3px;background:linear-gradient(180deg,rgba(255,255,255,0.300) 0,rgba(255,255,255,0.140) 45%,rgba(255,255,255,0.030) 50%,rgba(255,255,255,0.100) 100%);box-shadow:inset 0 0 0 1px rgba(255,255,255,0.350)"></div>
<svg class="abs" style="left:1073.0px;top:877px" width="18" height="17" viewBox="0 0 18 17"><rect x="3" y="0.500" width="12" height="16" rx="1" fill="#d8e4f4" stroke="#5a7aa8"/><rect x="5" y="2.500" width="8" height="3.500" fill="#8ab8e8"/><path d="M5.500 8.500 h1.500 M8.200 8.500 h1.500 M11 8.500 h1.500 M5.500 11 h1.500 M8.200 11 h1.500 M11 11 h1.500 M5.500 13.500 h1.500 M8.200 13.500 h1.500 M11 13.500 h1.500" stroke="#4a6a98" stroke-width="1.500"/></svg>
<div class="abs" style="left:1093.5px;top:877px;font-size:13.500px;line-height:17px;color:#fff;white-space:nowrap;font-family:'Liberation Sans','Noto Sans CJK SC',sans-serif">计...</div>
<svg class="abs" style="left:1130px;top:871px" width="240" height="29" viewBox="1130 871 240 29">
<rect x="1137.500" y="875.500" width="15" height="14" rx="2" fill="#28b838" stroke="#e8ffe8" stroke-width="1.200"/><text x="1140.500" y="887.500" font-family="Liberation Sans,sans-serif" font-size="13" font-weight="bold" fill="#fff">S</text>
<circle cx="1167" cy="883" r="7.500" fill="#1a2ab8" stroke="#c8d8f8" stroke-width="1.200"/><text x="1163.200" y="888" font-family="Liberation Sans,sans-serif" font-size="12" font-weight="bold" fill="#fff">?</text>
<rect x="1184.500" y="879.500" width="6" height="4" fill="none" stroke="#fff"/><rect x="1187.500" y="877.500" width="6" height="4" fill="#4d6a85" stroke="#fff"/><path d="M1185 887 h7 l-3.500 4 Z" fill="#fff"/>
<rect x="1203" y="879" width="16" height="15" rx="2" fill="#2a8ae0"/><path d="M1207 892 L1209 884 Q1210 881 1214 881 H1218 L1217.500 884 H1214 Q1212.500 884 1212.300 885 H1216 L1215.500 887.500 H1211.700 L1210.500 892 Z" fill="#fff"/>
<path d="M1226 892 L1237 879 L1238 892 Z" fill="#e02020"/><path d="M1236 884 L1245 892 L1239 891 Z" fill="#28c828"/>
<path d="M1263 877 q-3 -1 -4 2 q-7 -1 -8 5 q0 6 7 6 q6 0 6 -5 q0 -2 -3 -3 q3 -1 2 -5 Z M1255 883 q3 -2 5 1 q0 3 -3 3 q-3 0 -2 -4 Z" fill="#e03018" fill-rule="evenodd"/>
<path d="M1276 878 L1290 892 M1290 878 L1276 892" stroke="#8a1a9a" stroke-width="2.400"/>
<rect x="1303.500" y="882.500" width="11" height="8" fill="#3a5a78" stroke="#fff" stroke-width="1.400"/><path d="M1306 893.500 h7 M1300 877 v12 M1298 877 h4 v4 h-4 Z" stroke="#fff" stroke-width="1.300" fill="none"/>
<path d="M1324 882 h3 l4 -4 v14 l-4 -4 h-3 Z" fill="#fff"/><path d="M1333.500 881.500 q2 3.500 0 7 M1336 879.500 q3.500 5.500 0 11" stroke="#fff" stroke-width="1.200" fill="none"/>
<path d="M1348 877 V893" stroke="#fff" stroke-width="1.600"/><path d="M1349 878 q4 -2 7 0 v7 q-3 -2 -7 0 Z" fill="#fff"/><circle cx="1357" cy="889" r="4.500" fill="#e02020"/><path d="M1355 887 l4 4 M1359 887 l-4 4" stroke="#fff" stroke-width="1.300"/>
</svg>
<div class="abs" style="left:1382px;top:877px;font-size:13.500px;line-height:17px;color:#fff;white-space:nowrap;letter-spacing:-0.300px">16:47</div>
<div class="abs" style="left:1427px;top:871px;width:13px;height:29px;box-sizing:border-box;border-left:1px solid #2c3f52;background:linear-gradient(90deg,rgba(255,255,255,0.350),rgba(255,255,255,0.100))"></div>
<div class="abs" style="left:1231px;top:847px;width:205px;height:22px;box-sizing:border-box;background:rgba(236,248,250,0.920);border:1px solid #b8c8cc;border-radius:2px"></div>
<div class="abs" style="left:1374px;top:847px;width:1px;height:21px;background:#b8c8cc"></div>
<svg class="abs" style="left:1231px;top:847px" width="205" height="22" viewBox="1231 847 205 22">
<rect x="1234.500" y="849.500" width="16" height="16" rx="3.500" fill="#3cc84a" stroke="#c8f0c8" transform="rotate(-8 1242 857)"/><text x="1237.500" y="863" font-family="Liberation Sans,sans-serif" font-size="14" font-weight="bold" fill="#fff">S</text>
<text x="1256" y="864" font-family="Noto Sans CJK SC,sans-serif" font-size="16" fill="#3a7ac8">五</text>
<path d="M1288 851 q5 6 -3 13 q9 -1 9 -8 q0 -3 -6 -5 Z" fill="#3a7ac8"/>
<circle cx="1302.500" cy="853.500" r="1.800" fill="none" stroke="#3a7ac8" stroke-width="1.200"/><path d="M1307 859 q1.500 2 -1 4.500" stroke="#3a7ac8" stroke-width="1.800" fill="none"/>
<rect x="1315" y="852" width="17" height="11" rx="1" fill="#3a7ac8"/><path d="M1317 855 h13 M1317 857.500 h13" stroke="#fff" stroke-width="1.200" stroke-dasharray="1.500 1"/><path d="M1319 860.500 h9" stroke="#fff" stroke-width="1.200"/>
<rect x="1376" y="852" width="17" height="11" rx="1" fill="#3a7ac8"/><path d="M1378 855 h13 M1378 857.500 h13" stroke="#fff" stroke-width="1.200" stroke-dasharray="1.500 1"/><path d="M1380 860.500 h9" stroke="#fff" stroke-width="1.200"/>
<circle cx="1344" cy="854.500" r="3.200" fill="#a0a0a0"/><path d="M1337 864 q0 -6 6.500 -6 q6.500 0 6.500 6 Z" fill="#a0a0a0"/>
<circle cx="1405" cy="854.500" r="3.200" fill="#a0a0a0"/><path d="M1398 864 q0 -6 6.500 -6 q6.500 0 6.500 6 Z" fill="#a0a0a0"/>
<path d="M1357 864 l7 -7" stroke="#3a7ac8" stroke-width="3" stroke-linecap="round"/><path d="M1366 851 a4 4 0 1 0 4.500 5.500 l-3 -0.500 l-1.500 -2 Z" fill="#3a7ac8"/>
<path d="M1418 864 l7 -7" stroke="#3a7ac8" stroke-width="3" stroke-linecap="round"/><path d="M1427 851 a4 4 0 1 0 4.500 5.500 l-3 -0.500 l-1.500 -2 Z" fill="#3a7ac8"/>
</svg>

</div>
</body>
</html>
